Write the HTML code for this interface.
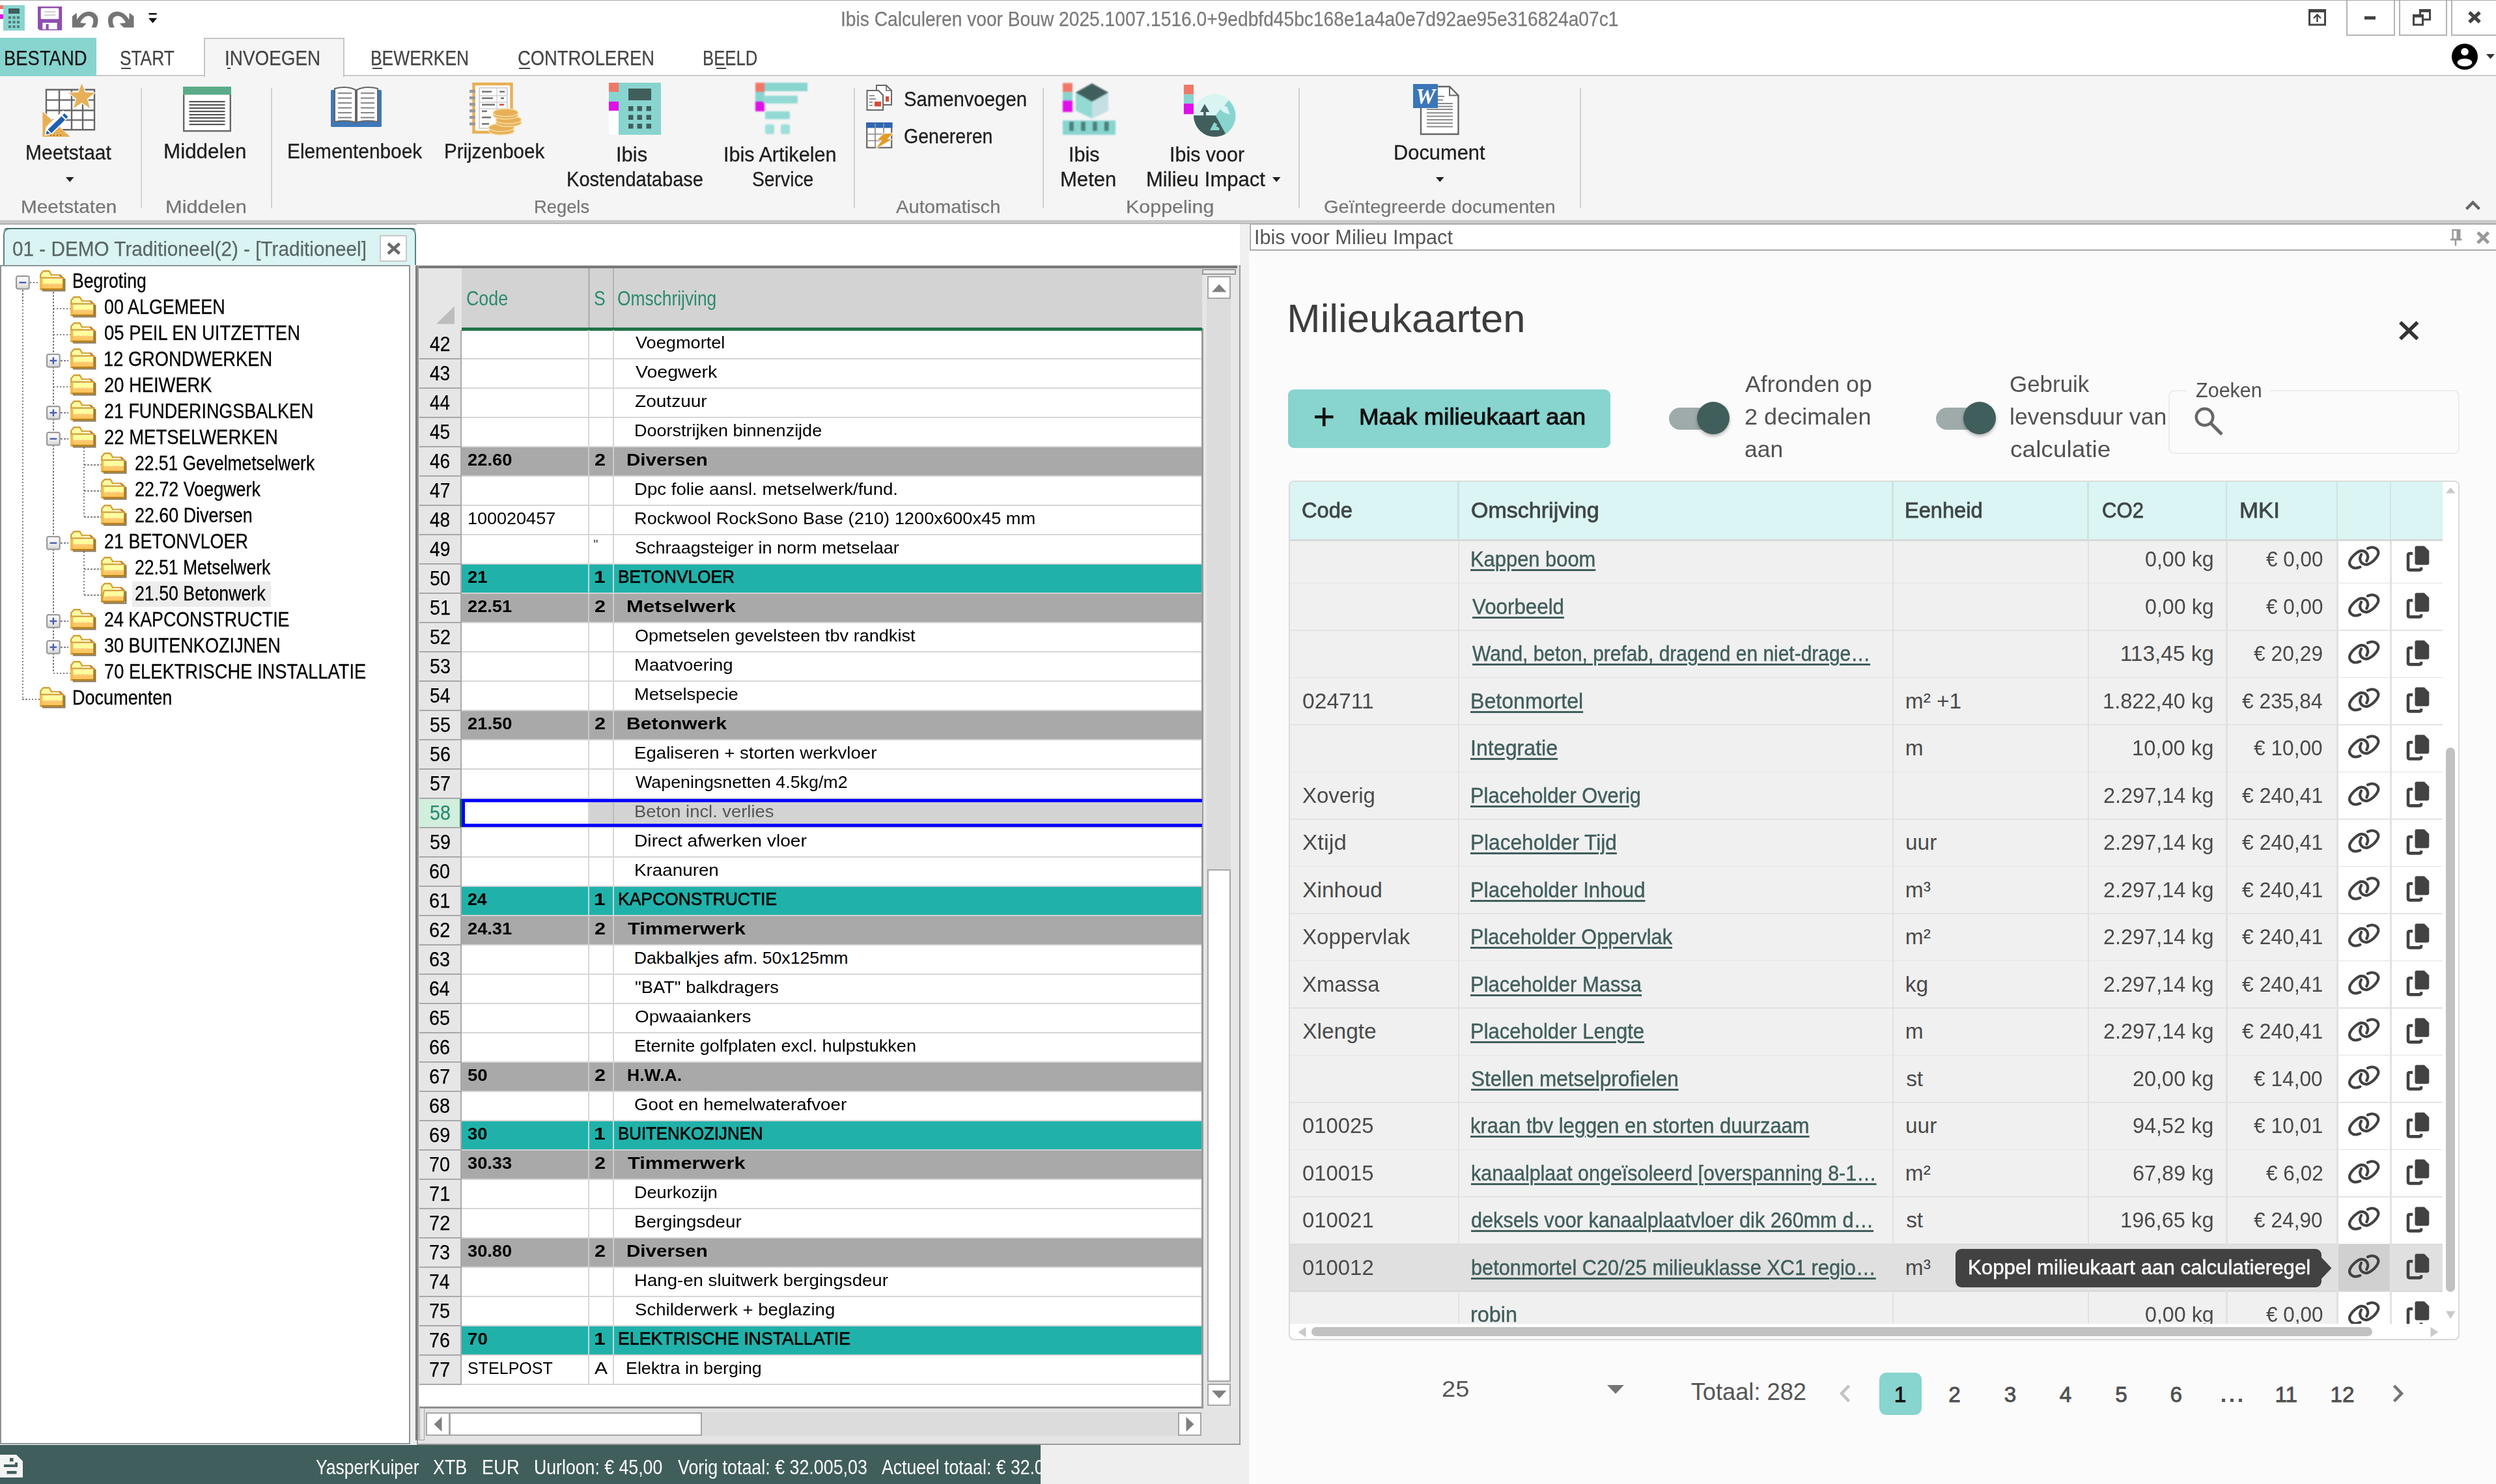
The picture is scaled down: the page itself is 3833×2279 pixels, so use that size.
<!DOCTYPE html>
<html><head><meta charset="utf-8"><title>Ibis Calculeren voor Bouw</title>
<style>
html,body{margin:0;padding:0;}
body{width:3833px;height:2279px;position:relative;overflow:hidden;background:#fff;font-family:"Liberation Sans",sans-serif;}
.b{position:absolute;box-sizing:border-box;}
.t{position:absolute;white-space:nowrap;transform-origin:0 50%;}
svg{overflow:visible;}
</style></head><body>
<svg class="b" style="left:0px;top:8px;" width="38" height="39" viewBox="0 0 38 39"><rect x="5" y="0" width="33" height="39" fill="#88d4cf"/>
<rect x="0" y="0" width="5" height="6" fill="#f07868"/><rect x="0" y="14" width="5" height="7" fill="#e010e8"/>
<rect x="13" y="5" width="17" height="8" fill="#405e5c"/>
<g fill="#4f7f7b"><rect x="13" y="17" width="4" height="4"/><rect x="19.5" y="17" width="4" height="4"/><rect x="26" y="17" width="4" height="4"/>
<rect x="13" y="24" width="4" height="4"/><rect x="19.5" y="24" width="4" height="4"/><rect x="26" y="24" width="4" height="4"/>
<rect x="13" y="31" width="4" height="4"/><rect x="19.5" y="31" width="4" height="4"/><rect x="26" y="31" width="4" height="4"/></g></svg>
<svg class="b" style="left:58px;top:10.3px;" width="38" height="37" viewBox="0 0 38 37"><path d="M0 0H37.200V36.500H3L0 33.500Z" fill="#8e4fae"/><rect x="4.700" y="2.600" width="27.600" height="16.700" rx="1.500" fill="#fff"/>
<rect x="9.800" y="7.300" width="17.500" height="1.800" fill="#c9c9c9"/><rect x="9.800" y="12.300" width="17.500" height="1.800" fill="#c9c9c9"/>
<rect x="7.300" y="25" width="22.400" height="9.900" fill="#fff"/><rect x="12.500" y="27" width="4.200" height="8" fill="#8e4fae"/></svg>
<svg class="b" style="left:110px;top:17px;" width="42" height="26" viewBox="0 0 42 26"><path d="M0.900 25.200V8L7.700 2.800L8.200 13.200C12 6 19 0.700 26.500 0.700C34 0.700 40.500 6 40.500 13.200C40.500 18 39.500 22 37.900 25.200H30.600C32.500 21 33.500 17.500 33.200 14.200C33 10 29.500 7.500 25.400 7.500C20.500 7.500 16 12 13.400 17.900L22.800 18.900L16.600 25.200Z" fill="#757575"/></svg>
<svg class="b" style="left:164.5px;top:17px;" width="42" height="26" viewBox="0 0 42 26"><g transform="translate(41.400,0) scale(-1,1)"><path d="M0.900 25.200V8L7.700 2.800L8.200 13.200C12 6 19 0.700 26.500 0.700C34 0.700 40.500 6 40.500 13.200C40.500 18 39.500 22 37.900 25.200H30.600C32.500 21 33.500 17.500 33.200 14.200C33 10 29.500 7.500 25.400 7.500C20.500 7.500 16 12 13.400 17.900L22.800 18.900L16.600 25.200Z" fill="#757575"/></g></svg>
<svg class="b" style="left:227.5px;top:19.8px;" width="15" height="17" viewBox="0 0 15 17"><rect x="0.600" y="0" width="12" height="2.600" fill="#111"/><path d="M0 7.800H13.200L6.600 15.600Z" fill="#111"/></svg>
<div class="t" style="top:13.7px;font-size:31.88px;line-height:31.88px;color:#7a7a7a;left:1291.46px;transform:scaleX(0.8838);-webkit-text-stroke:.25px #7a7a7a;">Ibis Calculeren voor Bouw 2025.1007.1516.0+9edbfd45bc168e1a4a0e7d92ae95e316824a07c1</div>
<svg class="b" style="left:3545px;top:14px;" width="28" height="26" viewBox="0 0 28 26"><rect x="1.5" y="3" width="24" height="21" fill="none" stroke="#444" stroke-width="3"/><rect x="0" y="0" width="27" height="5" fill="#444"/><path d="M13.5 20V9M8 14L13.5 8.5L19 14" fill="none" stroke="#444" stroke-width="2.4"/></svg>
<div class="b" style="left:3603px;top:-2px;width:75px;height:56.5px;background:#fff;border:2px solid #b4b4b4;"></div>
<div class="b" style="left:3683.5px;top:-2px;width:74px;height:56.5px;background:#fff;border:2px solid #b4b4b4;"></div>
<div class="b" style="left:3763.5px;top:-2px;width:76.5px;height:56.5px;background:#fff;border:2px solid #b4b4b4;"></div>
<div class="b" style="left:3630.5px;top:24.5px;width:17.5px;height:5.5px;background:#444;"></div>
<div class="b" style="left:0px;top:0px;width:3833px;height:1.2px;background:#a8a8a8;"></div>
<svg class="b" style="left:3705px;top:14px;" width="30" height="27" viewBox="0 0 30 27"><rect x="11.5" y="3" width="15" height="13" fill="#fff" stroke="#444" stroke-width="3"/><rect x="10" y="0" width="18" height="4.5" fill="#444"/><rect x="1.5" y="11" width="14" height="13" fill="#fff" stroke="#444" stroke-width="3"/><rect x="0" y="8" width="17" height="4.5" fill="#444"/></svg>
<svg class="b" style="left:3790px;top:17px;" width="20" height="19" viewBox="0 0 20 19"><path d="M2 2L18 17M18 2L2 17" stroke="#444" stroke-width="5.2" fill="none"/></svg>
<svg class="b" style="left:3765px;top:67px;" width="40" height="40" viewBox="0 0 40 40"><circle cx="20" cy="20" r="20" fill="#000"/><circle cx="20" cy="12.5" r="5.8" fill="#fff"/><ellipse cx="20" cy="29" rx="11.5" ry="6" fill="#fff"/></svg>
<svg class="b" style="left:3818px;top:83px;" width="14" height="8" viewBox="0 0 14 8"><path d="M0 0H13L6.5 7.5Z" fill="#333"/></svg>
<div class="b" style="left:0px;top:116px;width:3833px;height:222px;background:#f5f5f5;"></div>
<div class="b" style="left:0px;top:115px;width:3833px;height:2px;background:#c9c9c9;"></div>
<div class="b" style="left:0px;top:58px;width:148px;height:58.5px;background:#88d4cf;"></div>
<div class="b" style="left:313px;top:58px;width:216px;height:60px;background:#f5f5f5;border:2px solid #c6c6c6;border-bottom:none;"></div>
<div class="t" style="top:74px;font-size:31.88px;line-height:31.88px;color:#151515;left:5.81px;transform:scaleX(0.8604);-webkit-text-stroke:.25px #151515;">BESTAND</div>
<div class="t" style="top:74px;font-size:31.88px;line-height:31.88px;color:#444;left:183.82px;transform:scaleX(0.8243);-webkit-text-stroke:.25px #444;">START</div>
<div class="b" style="left:186px;top:103.5px;width:15.17px;height:2px;background:#444;"></div>
<div class="t" style="top:74px;font-size:31.88px;line-height:31.88px;color:#444;left:344.99px;transform:scaleX(0.8746);-webkit-text-stroke:.25px #444;">INVOEGEN</div>
<div class="b" style="left:348.5px;top:103.5px;width:5.5px;height:2px;background:#444;"></div>
<div class="t" style="top:74px;font-size:31.88px;line-height:31.88px;color:#444;left:568.89px;transform:scaleX(0.8285);-webkit-text-stroke:.25px #444;">BEWERKEN</div>
<div class="b" style="left:572px;top:103.5px;width:15.13px;height:2px;background:#444;"></div>
<div class="t" style="top:74px;font-size:31.88px;line-height:31.88px;color:#444;left:794.63px;transform:scaleX(0.8590);-webkit-text-stroke:.25px #444;">CONTROLEREN</div>
<div class="b" style="left:797px;top:103.5px;width:17.45px;height:2px;background:#444;"></div>
<div class="t" style="top:74px;font-size:31.88px;line-height:31.88px;color:#444;left:1078.94px;transform:scaleX(0.8065);-webkit-text-stroke:.25px #444;">BEELD</div>
<div class="b" style="left:1100px;top:103.5px;width:15px;height:2px;background:#444;"></div>
<div class="b" style="left:216px;top:135px;width:2px;height:185px;background:#d2d2d2;"></div>
<div class="b" style="left:416px;top:135px;width:2px;height:185px;background:#d2d2d2;"></div>
<div class="b" style="left:1310.5px;top:135px;width:2px;height:185px;background:#d2d2d2;"></div>
<div class="b" style="left:1601px;top:135px;width:2px;height:185px;background:#d2d2d2;"></div>
<div class="b" style="left:1993.5px;top:135px;width:2px;height:185px;background:#d2d2d2;"></div>
<div class="b" style="left:2425.5px;top:135px;width:2px;height:185px;background:#d2d2d2;"></div>
<div class="b" style="left:0px;top:337.5px;width:3833px;height:5.2px;background:#c9c9c9;"></div>
<div class="b" style="left:0px;top:342.5px;width:3833px;height:2px;background:#adadad;"></div>
<div class="t" style="top:219px;font-size:31.88px;line-height:31.88px;color:#1e1e1e;left:38.6px;transform:scaleX(0.9424);-webkit-text-stroke:.3px #1e1e1e;">Meetstaat</div>
<svg class="b" style="left:100.5px;top:272px;" width="13" height="8" viewBox="0 0 13 8"><path d="M0 0H12.5L6.25 7.5Z" fill="#222"/></svg>
<div class="t" style="top:304.2px;font-size:27.83px;line-height:27.83px;color:#777;left:31.62px;transform:scaleX(1.0695);-webkit-text-stroke:.25px #777;">Meetstaten</div>
<div class="t" style="top:217.2px;font-size:31.88px;line-height:31.88px;color:#1e1e1e;left:251.49px;transform:scaleX(0.9854);-webkit-text-stroke:.3px #1e1e1e;">Middelen</div>
<div class="t" style="top:304.2px;font-size:27.83px;line-height:27.83px;color:#777;left:254.04px;transform:scaleX(1.1061);-webkit-text-stroke:.25px #777;">Middelen</div>
<div class="t" style="top:217.2px;font-size:31.88px;line-height:31.88px;color:#1e1e1e;left:441.11px;transform:scaleX(0.9352);-webkit-text-stroke:.3px #1e1e1e;">Elementenboek</div>
<div class="t" style="top:217.2px;font-size:31.88px;line-height:31.88px;color:#1e1e1e;left:681.64px;transform:scaleX(0.9257);-webkit-text-stroke:.3px #1e1e1e;">Prijzenboek</div>
<div class="t" style="top:222.2px;font-size:31.88px;line-height:31.88px;color:#1e1e1e;left:946.21px;transform:scaleX(0.9716);-webkit-text-stroke:.3px #1e1e1e;">Ibis</div>
<div class="t" style="top:259.6px;font-size:31.88px;line-height:31.88px;color:#1e1e1e;left:869.67px;transform:scaleX(0.9116);-webkit-text-stroke:.3px #1e1e1e;">Kostendatabase</div>
<div class="t" style="top:222.2px;font-size:31.88px;line-height:31.88px;color:#1e1e1e;left:1111.24px;transform:scaleX(0.9602);-webkit-text-stroke:.3px #1e1e1e;">Ibis Artikelen</div>
<div class="t" style="top:259.6px;font-size:31.88px;line-height:31.88px;color:#1e1e1e;left:1154.73px;transform:scaleX(0.8878);-webkit-text-stroke:.3px #1e1e1e;">Service</div>
<div class="t" style="top:304.2px;font-size:27.83px;line-height:27.83px;color:#777;left:819.81px;transform:scaleX(0.9823);-webkit-text-stroke:.25px #777;">Regels</div>
<div class="t" style="top:136.5px;font-size:31.88px;line-height:31.88px;color:#1e1e1e;left:1387.68px;transform:scaleX(0.9194);-webkit-text-stroke:.3px #1e1e1e;">Samenvoegen</div>
<div class="t" style="top:194.2px;font-size:31.88px;line-height:31.88px;color:#1e1e1e;left:1387.57px;transform:scaleX(0.8952);-webkit-text-stroke:.3px #1e1e1e;">Genereren</div>
<div class="t" style="top:304.2px;font-size:27.83px;line-height:27.83px;color:#777;left:1376px;transform:scaleX(1.0471);-webkit-text-stroke:.25px #777;">Automatisch</div>
<div class="t" style="top:222.2px;font-size:31.88px;line-height:31.88px;color:#1e1e1e;left:1641.25px;transform:scaleX(0.9585);-webkit-text-stroke:.3px #1e1e1e;">Ibis</div>
<div class="t" style="top:259.6px;font-size:31.88px;line-height:31.88px;color:#1e1e1e;left:1627.52px;transform:scaleX(0.9742);-webkit-text-stroke:.3px #1e1e1e;">Meten</div>
<div class="t" style="top:222.2px;font-size:31.88px;line-height:31.88px;color:#1e1e1e;left:1796.26px;transform:scaleX(0.9558);-webkit-text-stroke:.3px #1e1e1e;">Ibis voor</div>
<div class="t" style="top:259.6px;font-size:31.88px;line-height:31.88px;color:#1e1e1e;left:1759.51px;transform:scaleX(0.9744);-webkit-text-stroke:.3px #1e1e1e;">Milieu Impact</div>
<svg class="b" style="left:1953.5px;top:271.5px;" width="13" height="8" viewBox="0 0 13 8"><path d="M0 0H12.5L6.25 7.5Z" fill="#222"/></svg>
<div class="t" style="top:304.2px;font-size:27.83px;line-height:27.83px;color:#777;left:1728.57px;transform:scaleX(1.0936);-webkit-text-stroke:.25px #777;">Koppeling</div>
<div class="t" style="top:219px;font-size:31.88px;line-height:31.88px;color:#1e1e1e;left:2139.53px;transform:scaleX(0.9672);-webkit-text-stroke:.3px #1e1e1e;">Document</div>
<svg class="b" style="left:2205px;top:272px;" width="13" height="8" viewBox="0 0 13 8"><path d="M0 0H12.5L6.25 7.5Z" fill="#222"/></svg>
<div class="t" style="top:304.2px;font-size:27.83px;line-height:27.83px;color:#777;left:2033.05px;transform:scaleX(1.0452);-webkit-text-stroke:.25px #777;">Geïntegreerde documenten</div>
<svg class="b" style="left:3785px;top:307px;" width="26" height="16" viewBox="0 0 26 16"><path d="M2.5 14L12.5 4L22.5 14" fill="none" stroke="#666" stroke-width="4.5"/></svg>
<svg class="b" style="left:65px;top:129px;" width="82" height="82" viewBox="0 0 82 82"><rect x="6" y="8.700" width="74" height="61.500" fill="#fff"/><g fill="none" stroke="#666" stroke-width="2.400"><path d="M6 8.700H80V70.200H6ZM6 24.600H80M6 40.500H80M6 55.400H80M26 8.700V70.200M45 8.700V70.200M62 8.700V70.200"/></g>
<path d="M60.6 -3.5L66.8 11.5L82.9 12.7L70.6 23.2L74.4 39.0L60.6 30.5L46.8 39.0L50.6 23.2L38.3 12.7L54.4 11.5Z" fill="#f5f5f5"/><path d="M60.6 -1.0L65.7 13.0L80.6 13.5L68.8 22.7L72.9 37.0L60.6 28.6L48.3 37.0L52.4 22.7L40.6 13.5L55.5 13.0Z" fill="#e8b056"/>
<path d="M-2 38L46 84H-2Z" fill="#f5f5f5"/><path d="M0.400 42.500V81H42.700Z" fill="#e8b056"/>
<path d="M3.500 79.500L5.500 66L32 40.500L42 49.500L15.500 76.500Z" fill="#fff"/><path d="M8.500 70L29.500 49.500L35 55L14 75.500Z" fill="#1f5fb0"/><path d="M31 48L34 45L39.500 50.500L36.500 53.500Z" fill="#1f5fb0"/><path d="M5.500 77.500L7 71.500L12 76Z" fill="#1f5fb0"/>
<g fill="#b07a28"><rect x="12" y="77.500" width="2" height="2.500"/><rect x="17" y="77.500" width="2" height="2.500"/><rect x="22" y="77.500" width="2" height="2.500"/><rect x="27" y="77.500" width="2" height="2.500"/></g></svg>
<svg class="b" style="left:281px;top:132.5px;" width="74" height="70" viewBox="0 0 74 70"><rect x="1.2" y="1.2" width="71.600" height="67" fill="#fff" stroke="#666" stroke-width="2.4"/><rect x="0" y="0" width="74" height="12.500" fill="#5aac88"/>
<g fill="#555"><rect x="9.500" y="22" width="55" height="2.2"/><rect x="9.500" y="27" width="55" height="2.2"/><rect x="9.500" y="32" width="55" height="2.2"/><rect x="9.500" y="37" width="55" height="2.2"/><rect x="9.500" y="42" width="55" height="2.2"/><rect x="9.500" y="47" width="55" height="2.2"/><rect x="9.500" y="52" width="55" height="2.2"/><rect x="9.500" y="57" width="55" height="2.2"/></g></svg>
<svg class="b" style="left:508px;top:134px;" width="78" height="62" viewBox="0 0 78 62"><rect x="0" y="4" width="78" height="57" rx="2" fill="#3f78b8"/><path d="M6 2C18 -1 30 0 38 4V54C30 51 18 51 6 53Z" fill="#fff" stroke="#666" stroke-width="2"/><path d="M72 2C60 -1 48 0 40 4V54C48 51 60 51 72 53Z" fill="#fff" stroke="#666" stroke-width="2"/>
<g fill="#8a8a8a"><rect x="11" y="8" width="21" height="2.200"/><rect x="11" y="15.500" width="21" height="2.200"/><rect x="11" y="23" width="21" height="2.200"/><rect x="11" y="30.500" width="21" height="2.200"/><rect x="11" y="38" width="21" height="2.200"/><rect x="11" y="45.500" width="21" height="2.200"/>
<rect x="46" y="8" width="21" height="2.200"/><rect x="46" y="15.500" width="21" height="2.200"/><rect x="46" y="23" width="21" height="2.200"/><rect x="46" y="30.500" width="21" height="2.200"/><rect x="46" y="38" width="21" height="2.200"/><rect x="46" y="45.500" width="21" height="2.200"/></g></svg>
<svg class="b" style="left:720px;top:127px;" width="81" height="82" viewBox="0 0 81 82"><rect x="7.500" y="2" width="58" height="74" fill="#fff" stroke="#e8b056" stroke-width="4.500"/><rect x="16" y="8" width="43" height="62" fill="#fff" stroke="#c8c8c8" stroke-width="1.500"/><path d="M43 8V45M16 20H59M16 30H59M16 40H59" stroke="#d0d0d0" stroke-width="1.300"/>
<g fill="#777"><rect x="20" y="12.500" width="15" height="2.600"/><rect x="20" y="22.500" width="17" height="2.600"/><rect x="20" y="32.500" width="20" height="2.600"/><rect x="20" y="42.500" width="8" height="2.600"/><rect x="20" y="52" width="14" height="2.600"/><rect x="20" y="62" width="11" height="2.600"/><rect x="47" y="12.500" width="8" height="2.600"/><rect x="49" y="22.500" width="5" height="2.600"/></g><rect x="47" y="32.500" width="7" height="2.600" fill="#d94a3a"/>
<g fill="#999"><rect x="1" y="11" width="9" height="4.500"/><rect x="1" y="21" width="9" height="4.500"/><rect x="1" y="31" width="9" height="4.500"/><rect x="1" y="41" width="9" height="4.500"/><rect x="1" y="51" width="9" height="4.500"/><rect x="1" y="61" width="9" height="4.500"/></g>
<g fill="#e8b056" stroke="#f6dca4" stroke-width="1.600"><ellipse cx="50" cy="74" rx="19.500" ry="6"/><ellipse cx="50" cy="69" rx="19.500" ry="6"/><ellipse cx="61" cy="61.500" rx="19.500" ry="6"/><ellipse cx="61" cy="57" rx="19.500" ry="6"/><ellipse cx="56.500" cy="50" rx="19" ry="6"/><ellipse cx="56.500" cy="46" rx="19" ry="6"/></g></svg>
<svg class="b" style="left:935px;top:127px;" width="81" height="81" viewBox="0 0 81 81"><rect x="0" y="0" width="15" height="80" fill="#fff"/><rect x="15" y="0" width="65" height="80" fill="#88d4cf"/><rect x="0" y="0" width="15" height="14" fill="#f07868"/><rect x="0" y="14" width="15" height="15" fill="#88d4cf"/><rect x="0" y="29" width="15" height="14" fill="#e010e8"/>
<rect x="30" y="9" width="35" height="18" fill="#405e5c"/><g fill="#405e5c"><rect x="30" y="36" width="7.500" height="7.500"/><rect x="43.500" y="36" width="7.500" height="7.500"/><rect x="57.500" y="36" width="7.500" height="7.500"/><rect x="30" y="49.500" width="7.500" height="7.500"/><rect x="43.500" y="49.500" width="7.500" height="7.500"/><rect x="57.500" y="49.500" width="7.500" height="7.500"/><rect x="30" y="63" width="7.500" height="7.500"/><rect x="43.500" y="63" width="7.500" height="7.500"/><rect x="57.500" y="63" width="7.500" height="7.500"/></g></svg>
<svg class="b" style="left:1160px;top:127px;filter:blur(.800px);" width="81" height="81" viewBox="0 0 81 81"><rect x="0" y="0" width="14" height="14" fill="#f07868"/><rect x="0" y="14" width="14" height="15" fill="#88d4cf"/><rect x="0" y="29" width="14" height="15" fill="#e010e8"/>
<rect x="14" y="0" width="66" height="13" fill="#88d4cf"/><rect x="12" y="20" width="53" height="12" rx="2" fill="#92d9d4"/><rect x="15" y="44" width="38" height="12" rx="2" fill="#92d9d4"/><rect x="15" y="64" width="14" height="15" rx="3" fill="#9fdeda"/><rect x="39" y="64" width="14" height="15" rx="3" fill="#9fdeda"/></svg>
<svg class="b" style="left:1330px;top:130px;" width="41" height="40" viewBox="0 0 41 40"><path d="M16 1H31L39 9V31H16Z" fill="#fff" stroke="#666" stroke-width="2"/><path d="M31 1V9H39" fill="none" stroke="#666" stroke-width="1.600"/><rect x="30" y="18" width="5" height="8" fill="#d94a3a"/>
<path d="M1.500 9H19L26 16V39H1.500Z" fill="#fff" stroke="#666" stroke-width="2"/><g fill="#888"><rect x="5" y="16" width="8" height="1.800"/><rect x="5" y="21" width="10" height="1.800"/><rect x="5" y="26" width="5" height="1.800"/><rect x="5" y="31" width="5" height="1.800"/></g><rect x="13" y="26" width="10" height="7.500" fill="#d94a3a"/></svg>
<svg class="b" style="left:1330px;top:187.5px;" width="41" height="40" viewBox="0 0 41 40"><rect x="1.200" y="1.200" width="38" height="37.500" fill="#fff" stroke="#666" stroke-width="2.200"/><rect x="0" y="0" width="40.500" height="8.500" fill="#2f66ad"/><path d="M1 18H40M1 28H22M14 3V39M27 3V18" stroke="#8a8a8a" stroke-width="1.700" fill="none"/><path d="M14 1V8M27 1V8" stroke="#6f98cc" stroke-width="1.500"/>
<path d="M20 20H38V40H20Z" fill="#fff" opacity=".0"/><path d="M40.900 17L26.800 17.400L17.900 26.700L24.400 27.500L15.500 40L38.500 26.300L32.400 25.500Z" fill="#e29c28" stroke="#f5f5f5" stroke-width="1.800" paint-order="stroke"/></svg>
<svg class="b" style="left:1632px;top:127px;filter:blur(1.100px);" width="82" height="81" viewBox="0 0 82 81"><rect x="0" y="0.500" width="15" height="14" fill="#f07868"/><rect x="0" y="14.500" width="15" height="13" fill="#88d4cf"/><rect x="0" y="27.500" width="15" height="17.500" fill="#e010e8"/>
<path d="M20 15L45 2L70 15V43L45 55L20 43Z" fill="#93d9d4"/><path d="M45 27L70 15V43L45 55Z" fill="#c4e0e4"/><path d="M20 15L45 1L70 15L45 29Z" fill="#405e5c"/>
<rect x="0" y="58" width="81" height="22" fill="#88d4cf"/><g fill="#4a7f7b"><rect x="10.200" y="60" width="6.500" height="14"/><rect x="28.200" y="60" width="6.500" height="14"/><rect x="46.200" y="60" width="6.500" height="14"/><rect x="64" y="60" width="6.500" height="14"/></g></svg>
<svg class="b" style="left:1817px;top:129px;filter:blur(.600px);" width="82" height="82" viewBox="0 0 82 82"><rect x="0.900" y="1.100" width="15.100" height="14.800" fill="#f07868"/><rect x="0.900" y="15.900" width="15.100" height="14.200" fill="#88d4cf"/><rect x="0.900" y="30.100" width="15.100" height="16.200" fill="#e010e8"/>
<circle cx="48.700" cy="48.300" r="32.700" fill="#d9f4f3"/>
<path d="M49.700 48.300L57.100 38.500L61.500 43.200L72 46.900L67.200 34.800L62.900 34.100L69.600 25A32.700 32.700 0 0 1 65.100 76.600Z" fill="#88d4cf"/>
<path d="M16 48.300H49.700L65.100 76.600A32.700 32.700 0 0 1 16 48.300Z" fill="#405e5c"/>
<path d="M26.100 42.900L32.900 30.800L40.300 42.900Z" fill="#405e5c"/><rect x="31.200" y="42" width="3.700" height="7" fill="#405e5c"/>
<path d="M41 70.900L47.400 58.700L52.500 62L50.500 64.500L55.400 67.500V70.900Z" fill="#88d4cf"/></svg>
<svg class="b" style="left:2170px;top:129px;" width="72" height="80" viewBox="0 0 72 80"><path d="M12 4H56L69.500 17.500V77H12Z" fill="#fff" stroke="#666" stroke-width="2.400"/><path d="M56 4V17.500H69.500" fill="none" stroke="#666" stroke-width="2"/>
<g fill="#8a8a8a"><rect x="38" y="18" width="10" height="2"/><rect x="38" y="23.500" width="8" height="2"/><rect x="21" y="38" width="40" height="2"/><rect x="21" y="43.300" width="40" height="2"/><rect x="21" y="48.600" width="40" height="2"/><rect x="21" y="53.900" width="40" height="2"/><rect x="21" y="59.200" width="40" height="2"/><rect x="21" y="64.500" width="40" height="2"/><rect x="38" y="29" width="23" height="2"/><rect x="38" y="33.500" width="23" height="2"/></g>
<rect x="0" y="0" width="38" height="37" fill="#3b76b8"/><text x="19" y="30" font-family="Liberation Serif" font-style="italic" font-weight="bold" font-size="34" fill="#fff" text-anchor="middle">W</text></svg>
<svg width="0" height="0" style="position:absolute"><defs><linearGradient id="fg" x1="0" y1="0" x2="0" y2="1"><stop offset="0" stop-color="#fffff4"/><stop offset=".16" stop-color="#ffff9e"/><stop offset=".5" stop-color="#ffff99"/><stop offset=".56" stop-color="#fecb68"/><stop offset="1" stop-color="#fbc25c"/></linearGradient><linearGradient id="pg" x1="0" y1="0" x2="0" y2="1"><stop offset="0" stop-color="#fcfcfc"/><stop offset=".5" stop-color="#f0f0f0"/><stop offset="1" stop-color="#d6d6d6"/></linearGradient></defs></svg>
<div class="b" style="left:5px;top:350px;width:633.5px;height:60px;background:#daf3f3;border:2px solid #5c7f80;border-radius:10px 10px 0 0;border-bottom:none;"></div>
<div class="b" style="left:5px;top:350px;width:633.5px;height:6px;border-radius:12px 12px 0 0;border-top:2.200px solid #4a7272;"></div>
<div class="t" style="top:366.8px;font-size:31.88px;line-height:31.88px;color:#5a6666;left:19.46px;transform:scaleX(0.9323);-webkit-text-stroke:.25px #5a6666;">01 - DEMO Traditioneel(2) - [Traditioneel]</div>
<div class="b" style="left:583px;top:361px;width:42px;height:41px;background:#fff;border:2px solid #c9c9c9;"></div>
<svg class="b" style="left:593.5px;top:371.5px;" width="22" height="20" viewBox="0 0 22 20"><path d="M2 2L19.500 17.500M19.500 2L2 17.500" stroke="#6a6a6a" stroke-width="4.600" fill="none"/></svg>
<div class="b" style="left:0px;top:407px;width:630.3px;height:1811px;background:#fff;border:2.500px solid #8e949c;"></div>
<div class="b" style="left:630.3px;top:407px;width:10px;height:1812px;background:#f0f0f0;"></div>
<div class="b" style="left:33.5px;top:445px;width:2px;height:628px;background:repeating-linear-gradient(180deg,#808080 0 2.500px,transparent 2.500px 5px);"></div>
<div class="b" style="left:46px;top:433px;width:15px;height:2px;background:repeating-linear-gradient(90deg,#808080 0 2.500px,transparent 2.500px 5px);"></div>
<div class="b" style="left:34px;top:1073px;width:27px;height:2px;background:repeating-linear-gradient(90deg,#808080 0 2.500px,transparent 2.500px 5px);"></div>
<div class="b" style="left:81px;top:448px;width:2px;height:585px;background:repeating-linear-gradient(180deg,#808080 0 2.500px,transparent 2.500px 5px);"></div>
<div class="b" style="left:128px;top:687px;width:2px;height:106px;background:repeating-linear-gradient(180deg,#808080 0 2.500px,transparent 2.500px 5px);"></div>
<div class="b" style="left:128px;top:847px;width:2px;height:66px;background:repeating-linear-gradient(180deg,#808080 0 2.500px,transparent 2.500px 5px);"></div>
<svg class="b" style="left:60.9px;top:414.5px;" width="40" height="33" viewBox="0 0 40 33"><path d="M4 31.300H38.300V13" stroke="#4a3c20" stroke-width="2.300" fill="none" opacity=".7"/><path d="M1.200 28V6.500L5.500 1.250H14.600L18.200 7.300H31L35.300 11.500V28Z" fill="#fbfba4" stroke="#d4a035" stroke-width="2.300" stroke-linejoin="round"/><path d="M19 9.600H30.500" stroke="#fff" stroke-width="2"/><path d="M30.500 7.300L35.300 11.800" stroke="#c8703a" stroke-width="2.300"/><rect x="1.200" y="11.600" width="35.300" height="17.600" fill="url(#fg)" stroke="#d4a035" stroke-width="2.300"/>
<rect x="0.100" y="12.500" width="4.300" height="16" fill="#f2bc4e"/><path d="M2.500 29.200H37" stroke="#b8801e" stroke-width="2.600"/><path d="M36.500 13V29.500" stroke="#ad7a1e" stroke-width="2.300"/>
<path d="M10.500 21.300H31" stroke="#ffc49a" stroke-width="2" stroke-dasharray="3.500 3.500"/></svg>
<svg class="b" style="left:23.5px;top:422.5px;" width="22" height="22" viewBox="0 0 22 22"><rect x="1.100" y="1.100" width="19.600" height="19.600" rx="2.500" fill="url(#pg)" stroke="#9b9b9b" stroke-width="2.200"/><path d="M5.500 10.900H16.300" stroke="#4a5eb0" stroke-width="2.400"/></svg>
<div class="t" style="top:416.2px;font-size:31.59px;line-height:31.59px;color:#000;left:111.47px;transform:scaleX(0.8410);-webkit-text-stroke:.3px #000;">Begroting</div>
<div class="b" style="left:82px;top:473px;width:26px;height:2px;background:repeating-linear-gradient(90deg,#808080 0 2.500px,transparent 2.500px 5px);"></div>
<svg class="b" style="left:107.9px;top:454.5px;" width="40" height="33" viewBox="0 0 40 33"><path d="M4 31.300H38.300V13" stroke="#4a3c20" stroke-width="2.300" fill="none" opacity=".7"/><path d="M1.200 28V6.500L5.500 1.250H14.600L18.200 7.300H31L35.300 11.500V28Z" fill="#fbfba4" stroke="#d4a035" stroke-width="2.300" stroke-linejoin="round"/><path d="M19 9.600H30.500" stroke="#fff" stroke-width="2"/><path d="M30.500 7.300L35.300 11.800" stroke="#c8703a" stroke-width="2.300"/><rect x="1.200" y="11.600" width="35.300" height="17.600" fill="url(#fg)" stroke="#d4a035" stroke-width="2.300"/>
<rect x="0.100" y="12.500" width="4.300" height="16" fill="#f2bc4e"/><path d="M2.500 29.200H37" stroke="#b8801e" stroke-width="2.600"/><path d="M36.500 13V29.500" stroke="#ad7a1e" stroke-width="2.300"/>
<path d="M10.500 21.300H31" stroke="#ffc49a" stroke-width="2" stroke-dasharray="3.500 3.500"/></svg>
<div class="t" style="top:456.2px;font-size:31.59px;line-height:31.59px;color:#000;left:159.96px;transform:scaleX(0.8529);-webkit-text-stroke:.3px #000;">00 ALGEMEEN</div>
<div class="b" style="left:82px;top:513px;width:26px;height:2px;background:repeating-linear-gradient(90deg,#808080 0 2.500px,transparent 2.500px 5px);"></div>
<svg class="b" style="left:107.9px;top:494.5px;" width="40" height="33" viewBox="0 0 40 33"><path d="M4 31.300H38.300V13" stroke="#4a3c20" stroke-width="2.300" fill="none" opacity=".7"/><path d="M1.200 28V6.500L5.500 1.250H14.600L18.200 7.300H31L35.300 11.500V28Z" fill="#fbfba4" stroke="#d4a035" stroke-width="2.300" stroke-linejoin="round"/><path d="M19 9.600H30.500" stroke="#fff" stroke-width="2"/><path d="M30.500 7.300L35.300 11.800" stroke="#c8703a" stroke-width="2.300"/><rect x="1.200" y="11.600" width="35.300" height="17.600" fill="url(#fg)" stroke="#d4a035" stroke-width="2.300"/>
<rect x="0.100" y="12.500" width="4.300" height="16" fill="#f2bc4e"/><path d="M2.500 29.200H37" stroke="#b8801e" stroke-width="2.600"/><path d="M36.500 13V29.500" stroke="#ad7a1e" stroke-width="2.300"/>
<path d="M10.500 21.300H31" stroke="#ffc49a" stroke-width="2" stroke-dasharray="3.500 3.500"/></svg>
<div class="t" style="top:496.2px;font-size:31.59px;line-height:31.59px;color:#000;left:159.94px;transform:scaleX(0.8692);-webkit-text-stroke:.3px #000;">05 PEIL EN UITZETTEN</div>
<div class="b" style="left:93px;top:553px;width:15px;height:2px;background:repeating-linear-gradient(90deg,#808080 0 2.500px,transparent 2.500px 5px);"></div>
<svg class="b" style="left:107.9px;top:534.5px;" width="40" height="33" viewBox="0 0 40 33"><path d="M4 31.300H38.300V13" stroke="#4a3c20" stroke-width="2.300" fill="none" opacity=".7"/><path d="M1.200 28V6.500L5.500 1.250H14.600L18.200 7.300H31L35.300 11.500V28Z" fill="#fbfba4" stroke="#d4a035" stroke-width="2.300" stroke-linejoin="round"/><path d="M19 9.600H30.500" stroke="#fff" stroke-width="2"/><path d="M30.500 7.300L35.300 11.800" stroke="#c8703a" stroke-width="2.300"/><rect x="1.200" y="11.600" width="35.300" height="17.600" fill="url(#fg)" stroke="#d4a035" stroke-width="2.300"/>
<rect x="0.100" y="12.500" width="4.300" height="16" fill="#f2bc4e"/><path d="M2.500 29.200H37" stroke="#b8801e" stroke-width="2.600"/><path d="M36.500 13V29.500" stroke="#ad7a1e" stroke-width="2.300"/>
<path d="M10.500 21.300H31" stroke="#ffc49a" stroke-width="2" stroke-dasharray="3.500 3.500"/></svg>
<svg class="b" style="left:71px;top:542.5px;" width="22" height="22" viewBox="0 0 22 22"><rect x="1.100" y="1.100" width="19.600" height="19.600" rx="2.500" fill="url(#pg)" stroke="#9b9b9b" stroke-width="2.200"/><path d="M5.500 10.900H16.300" stroke="#4a5eb0" stroke-width="2.400"/><path d="M10.900 5.500V16.300" stroke="#4a5eb0" stroke-width="2.400"/></svg>
<div class="t" style="top:536.2px;font-size:31.59px;line-height:31.59px;color:#000;left:158.85px;transform:scaleX(0.8636);-webkit-text-stroke:.3px #000;">12 GRONDWERKEN</div>
<div class="b" style="left:82px;top:593px;width:26px;height:2px;background:repeating-linear-gradient(90deg,#808080 0 2.500px,transparent 2.500px 5px);"></div>
<svg class="b" style="left:107.9px;top:574.5px;" width="40" height="33" viewBox="0 0 40 33"><path d="M4 31.300H38.300V13" stroke="#4a3c20" stroke-width="2.300" fill="none" opacity=".7"/><path d="M1.200 28V6.500L5.500 1.250H14.600L18.200 7.300H31L35.300 11.500V28Z" fill="#fbfba4" stroke="#d4a035" stroke-width="2.300" stroke-linejoin="round"/><path d="M19 9.600H30.500" stroke="#fff" stroke-width="2"/><path d="M30.500 7.300L35.300 11.800" stroke="#c8703a" stroke-width="2.300"/><rect x="1.200" y="11.600" width="35.300" height="17.600" fill="url(#fg)" stroke="#d4a035" stroke-width="2.300"/>
<rect x="0.100" y="12.500" width="4.300" height="16" fill="#f2bc4e"/><path d="M2.500 29.200H37" stroke="#b8801e" stroke-width="2.600"/><path d="M36.500 13V29.500" stroke="#ad7a1e" stroke-width="2.300"/>
<path d="M10.500 21.300H31" stroke="#ffc49a" stroke-width="2" stroke-dasharray="3.500 3.500"/></svg>
<div class="t" style="top:576.2px;font-size:31.59px;line-height:31.59px;color:#000;left:159.53px;transform:scaleX(0.8657);-webkit-text-stroke:.3px #000;">20 HEIWERK</div>
<div class="b" style="left:93px;top:633px;width:15px;height:2px;background:repeating-linear-gradient(90deg,#808080 0 2.500px,transparent 2.500px 5px);"></div>
<svg class="b" style="left:107.9px;top:614.5px;" width="40" height="33" viewBox="0 0 40 33"><path d="M4 31.300H38.300V13" stroke="#4a3c20" stroke-width="2.300" fill="none" opacity=".7"/><path d="M1.200 28V6.500L5.500 1.250H14.600L18.200 7.300H31L35.300 11.500V28Z" fill="#fbfba4" stroke="#d4a035" stroke-width="2.300" stroke-linejoin="round"/><path d="M19 9.600H30.500" stroke="#fff" stroke-width="2"/><path d="M30.500 7.300L35.300 11.800" stroke="#c8703a" stroke-width="2.300"/><rect x="1.200" y="11.600" width="35.300" height="17.600" fill="url(#fg)" stroke="#d4a035" stroke-width="2.300"/>
<rect x="0.100" y="12.500" width="4.300" height="16" fill="#f2bc4e"/><path d="M2.500 29.200H37" stroke="#b8801e" stroke-width="2.600"/><path d="M36.500 13V29.500" stroke="#ad7a1e" stroke-width="2.300"/>
<path d="M10.500 21.300H31" stroke="#ffc49a" stroke-width="2" stroke-dasharray="3.500 3.500"/></svg>
<svg class="b" style="left:71px;top:622.5px;" width="22" height="22" viewBox="0 0 22 22"><rect x="1.100" y="1.100" width="19.600" height="19.600" rx="2.500" fill="url(#pg)" stroke="#9b9b9b" stroke-width="2.200"/><path d="M5.500 10.900H16.300" stroke="#4a5eb0" stroke-width="2.400"/><path d="M10.900 5.500V16.300" stroke="#4a5eb0" stroke-width="2.400"/></svg>
<div class="t" style="top:616.2px;font-size:31.59px;line-height:31.59px;color:#000;left:159.55px;transform:scaleX(0.8518);-webkit-text-stroke:.3px #000;">21 FUNDERINGSBALKEN</div>
<div class="b" style="left:93px;top:673px;width:15px;height:2px;background:repeating-linear-gradient(90deg,#808080 0 2.500px,transparent 2.500px 5px);"></div>
<svg class="b" style="left:107.9px;top:654.5px;" width="40" height="33" viewBox="0 0 40 33"><path d="M4 31.300H38.300V13" stroke="#4a3c20" stroke-width="2.300" fill="none" opacity=".7"/><path d="M1.200 28V6.500L5.500 1.250H14.600L18.200 7.300H31L35.300 11.500V28Z" fill="#fbfba4" stroke="#d4a035" stroke-width="2.300" stroke-linejoin="round"/><path d="M19 9.600H30.500" stroke="#fff" stroke-width="2"/><path d="M30.500 7.300L35.300 11.800" stroke="#c8703a" stroke-width="2.300"/><rect x="1.200" y="11.600" width="35.300" height="17.600" fill="url(#fg)" stroke="#d4a035" stroke-width="2.300"/>
<rect x="0.100" y="12.500" width="4.300" height="16" fill="#f2bc4e"/><path d="M2.500 29.200H37" stroke="#b8801e" stroke-width="2.600"/><path d="M36.500 13V29.500" stroke="#ad7a1e" stroke-width="2.300"/>
<path d="M10.500 21.300H31" stroke="#ffc49a" stroke-width="2" stroke-dasharray="3.500 3.500"/></svg>
<svg class="b" style="left:71px;top:662.5px;" width="22" height="22" viewBox="0 0 22 22"><rect x="1.100" y="1.100" width="19.600" height="19.600" rx="2.500" fill="url(#pg)" stroke="#9b9b9b" stroke-width="2.200"/><path d="M5.500 10.900H16.300" stroke="#4a5eb0" stroke-width="2.400"/></svg>
<div class="t" style="top:656.2px;font-size:31.59px;line-height:31.59px;color:#000;left:159.52px;transform:scaleX(0.8706);-webkit-text-stroke:.3px #000;">22 METSELWERKEN</div>
<div class="b" style="left:129px;top:713px;width:26px;height:2px;background:repeating-linear-gradient(90deg,#808080 0 2.500px,transparent 2.500px 5px);"></div>
<svg class="b" style="left:154.9px;top:694.5px;" width="40" height="33" viewBox="0 0 40 33"><path d="M4 31.300H38.300V13" stroke="#4a3c20" stroke-width="2.300" fill="none" opacity=".7"/><path d="M1.200 28V6.500L5.500 1.250H14.600L18.200 7.300H31L35.300 11.500V28Z" fill="#fbfba4" stroke="#d4a035" stroke-width="2.300" stroke-linejoin="round"/><path d="M19 9.600H30.500" stroke="#fff" stroke-width="2"/><path d="M30.500 7.300L35.300 11.800" stroke="#c8703a" stroke-width="2.300"/><rect x="1.200" y="11.600" width="35.300" height="17.600" fill="url(#fg)" stroke="#d4a035" stroke-width="2.300"/>
<rect x="0.100" y="12.500" width="4.300" height="16" fill="#f2bc4e"/><path d="M2.500 29.200H37" stroke="#b8801e" stroke-width="2.600"/><path d="M36.500 13V29.500" stroke="#ad7a1e" stroke-width="2.300"/>
<path d="M10.500 21.300H31" stroke="#ffc49a" stroke-width="2" stroke-dasharray="3.500 3.500"/></svg>
<div class="t" style="top:696.2px;font-size:31.59px;line-height:31.59px;color:#000;left:206.88px;transform:scaleX(0.8368);-webkit-text-stroke:.3px #000;">22.51 Gevelmetselwerk</div>
<div class="b" style="left:129px;top:753px;width:26px;height:2px;background:repeating-linear-gradient(90deg,#808080 0 2.500px,transparent 2.500px 5px);"></div>
<svg class="b" style="left:154.9px;top:734.5px;" width="40" height="33" viewBox="0 0 40 33"><path d="M4 31.300H38.300V13" stroke="#4a3c20" stroke-width="2.300" fill="none" opacity=".7"/><path d="M1.200 28V6.500L5.500 1.250H14.600L18.200 7.300H31L35.300 11.500V28Z" fill="#fbfba4" stroke="#d4a035" stroke-width="2.300" stroke-linejoin="round"/><path d="M19 9.600H30.500" stroke="#fff" stroke-width="2"/><path d="M30.500 7.300L35.300 11.800" stroke="#c8703a" stroke-width="2.300"/><rect x="1.200" y="11.600" width="35.300" height="17.600" fill="url(#fg)" stroke="#d4a035" stroke-width="2.300"/>
<rect x="0.100" y="12.500" width="4.300" height="16" fill="#f2bc4e"/><path d="M2.500 29.200H37" stroke="#b8801e" stroke-width="2.600"/><path d="M36.500 13V29.500" stroke="#ad7a1e" stroke-width="2.300"/>
<path d="M10.500 21.300H31" stroke="#ffc49a" stroke-width="2" stroke-dasharray="3.500 3.500"/></svg>
<div class="t" style="top:736.2px;font-size:31.59px;line-height:31.59px;color:#000;left:206.85px;transform:scaleX(0.8520);-webkit-text-stroke:.3px #000;">22.72 Voegwerk</div>
<div class="b" style="left:129px;top:793px;width:26px;height:2px;background:repeating-linear-gradient(90deg,#808080 0 2.500px,transparent 2.500px 5px);"></div>
<svg class="b" style="left:154.9px;top:774.5px;" width="40" height="33" viewBox="0 0 40 33"><path d="M4 31.300H38.300V13" stroke="#4a3c20" stroke-width="2.300" fill="none" opacity=".7"/><path d="M1.200 28V6.500L5.500 1.250H14.600L18.200 7.300H31L35.300 11.500V28Z" fill="#fbfba4" stroke="#d4a035" stroke-width="2.300" stroke-linejoin="round"/><path d="M19 9.600H30.500" stroke="#fff" stroke-width="2"/><path d="M30.500 7.300L35.300 11.800" stroke="#c8703a" stroke-width="2.300"/><rect x="1.200" y="11.600" width="35.300" height="17.600" fill="url(#fg)" stroke="#d4a035" stroke-width="2.300"/>
<rect x="0.100" y="12.500" width="4.300" height="16" fill="#f2bc4e"/><path d="M2.500 29.200H37" stroke="#b8801e" stroke-width="2.600"/><path d="M36.500 13V29.500" stroke="#ad7a1e" stroke-width="2.300"/>
<path d="M10.500 21.300H31" stroke="#ffc49a" stroke-width="2" stroke-dasharray="3.500 3.500"/></svg>
<div class="t" style="top:776.2px;font-size:31.59px;line-height:31.59px;color:#000;left:206.86px;transform:scaleX(0.8507);-webkit-text-stroke:.3px #000;">22.60 Diversen</div>
<div class="b" style="left:93px;top:833px;width:15px;height:2px;background:repeating-linear-gradient(90deg,#808080 0 2.500px,transparent 2.500px 5px);"></div>
<svg class="b" style="left:107.9px;top:814.5px;" width="40" height="33" viewBox="0 0 40 33"><path d="M4 31.300H38.300V13" stroke="#4a3c20" stroke-width="2.300" fill="none" opacity=".7"/><path d="M1.200 28V6.500L5.500 1.250H14.600L18.200 7.300H31L35.300 11.500V28Z" fill="#fbfba4" stroke="#d4a035" stroke-width="2.300" stroke-linejoin="round"/><path d="M19 9.600H30.500" stroke="#fff" stroke-width="2"/><path d="M30.500 7.300L35.300 11.800" stroke="#c8703a" stroke-width="2.300"/><rect x="1.200" y="11.600" width="35.300" height="17.600" fill="url(#fg)" stroke="#d4a035" stroke-width="2.300"/>
<rect x="0.100" y="12.500" width="4.300" height="16" fill="#f2bc4e"/><path d="M2.500 29.200H37" stroke="#b8801e" stroke-width="2.600"/><path d="M36.500 13V29.500" stroke="#ad7a1e" stroke-width="2.300"/>
<path d="M10.500 21.300H31" stroke="#ffc49a" stroke-width="2" stroke-dasharray="3.500 3.500"/></svg>
<svg class="b" style="left:71px;top:822.5px;" width="22" height="22" viewBox="0 0 22 22"><rect x="1.100" y="1.100" width="19.600" height="19.600" rx="2.500" fill="url(#pg)" stroke="#9b9b9b" stroke-width="2.200"/><path d="M5.500 10.900H16.300" stroke="#4a5eb0" stroke-width="2.400"/></svg>
<div class="t" style="top:816.2px;font-size:31.59px;line-height:31.59px;color:#000;left:159.55px;transform:scaleX(0.8526);-webkit-text-stroke:.3px #000;">21 BETONVLOER</div>
<div class="b" style="left:129px;top:873px;width:26px;height:2px;background:repeating-linear-gradient(90deg,#808080 0 2.500px,transparent 2.500px 5px);"></div>
<svg class="b" style="left:154.9px;top:854.5px;" width="40" height="33" viewBox="0 0 40 33"><path d="M4 31.300H38.300V13" stroke="#4a3c20" stroke-width="2.300" fill="none" opacity=".7"/><path d="M1.200 28V6.500L5.500 1.250H14.600L18.200 7.300H31L35.300 11.500V28Z" fill="#fbfba4" stroke="#d4a035" stroke-width="2.300" stroke-linejoin="round"/><path d="M19 9.600H30.500" stroke="#fff" stroke-width="2"/><path d="M30.500 7.300L35.300 11.800" stroke="#c8703a" stroke-width="2.300"/><rect x="1.200" y="11.600" width="35.300" height="17.600" fill="url(#fg)" stroke="#d4a035" stroke-width="2.300"/>
<rect x="0.100" y="12.500" width="4.300" height="16" fill="#f2bc4e"/><path d="M2.500 29.200H37" stroke="#b8801e" stroke-width="2.600"/><path d="M36.500 13V29.500" stroke="#ad7a1e" stroke-width="2.300"/>
<path d="M10.500 21.300H31" stroke="#ffc49a" stroke-width="2" stroke-dasharray="3.500 3.500"/></svg>
<div class="t" style="top:856.2px;font-size:31.59px;line-height:31.59px;color:#000;left:206.87px;transform:scaleX(0.8419);-webkit-text-stroke:.3px #000;">22.51 Metselwerk</div>
<div class="b" style="left:129px;top:913px;width:26px;height:2px;background:repeating-linear-gradient(90deg,#808080 0 2.500px,transparent 2.500px 5px);"></div>
<div class="b" style="left:203px;top:892.7px;width:212.5px;height:39.5px;background:#ededed;"></div>
<svg class="b" style="left:154.9px;top:894.5px;" width="40" height="33" viewBox="0 0 40 33"><path d="M4 31.300H38.300V13" stroke="#4a3c20" stroke-width="2.300" fill="none" opacity=".7"/><path d="M1.200 28V6.500L5.500 1.250H14.600L18.200 7.300H31L35.300 11.500V28Z" fill="#fbfba4" stroke="#d4a035" stroke-width="2.300" stroke-linejoin="round"/><path d="M19 9.600H30.500" stroke="#fff" stroke-width="2"/><path d="M30.500 7.300L35.300 11.800" stroke="#c8703a" stroke-width="2.300"/><path d="M4.800 11.800H36.500L35 29H1.200Z" fill="url(#fg)" stroke="#d4a035" stroke-width="2.300" stroke-linejoin="round"/>
<path d="M1.300 29H35.300" stroke="#b8801e" stroke-width="2.600"/><path d="M36.300 13V29" stroke="#ad7a1e" stroke-width="2.200"/>
<path d="M11 21.300H31" stroke="#ffc49a" stroke-width="2" stroke-dasharray="3.500 3.500"/></svg>
<div class="t" style="top:896.2px;font-size:31.59px;line-height:31.59px;color:#000;left:206.86px;transform:scaleX(0.8464);-webkit-text-stroke:.3px #000;">21.50 Betonwerk</div>
<div class="b" style="left:93px;top:953px;width:15px;height:2px;background:repeating-linear-gradient(90deg,#808080 0 2.500px,transparent 2.500px 5px);"></div>
<svg class="b" style="left:107.9px;top:934.5px;" width="40" height="33" viewBox="0 0 40 33"><path d="M4 31.300H38.300V13" stroke="#4a3c20" stroke-width="2.300" fill="none" opacity=".7"/><path d="M1.200 28V6.500L5.500 1.250H14.600L18.200 7.300H31L35.300 11.500V28Z" fill="#fbfba4" stroke="#d4a035" stroke-width="2.300" stroke-linejoin="round"/><path d="M19 9.600H30.500" stroke="#fff" stroke-width="2"/><path d="M30.500 7.300L35.300 11.800" stroke="#c8703a" stroke-width="2.300"/><rect x="1.200" y="11.600" width="35.300" height="17.600" fill="url(#fg)" stroke="#d4a035" stroke-width="2.300"/>
<rect x="0.100" y="12.500" width="4.300" height="16" fill="#f2bc4e"/><path d="M2.500 29.200H37" stroke="#b8801e" stroke-width="2.600"/><path d="M36.500 13V29.500" stroke="#ad7a1e" stroke-width="2.300"/>
<path d="M10.500 21.300H31" stroke="#ffc49a" stroke-width="2" stroke-dasharray="3.500 3.500"/></svg>
<svg class="b" style="left:71px;top:942.5px;" width="22" height="22" viewBox="0 0 22 22"><rect x="1.100" y="1.100" width="19.600" height="19.600" rx="2.500" fill="url(#pg)" stroke="#9b9b9b" stroke-width="2.200"/><path d="M5.500 10.900H16.300" stroke="#4a5eb0" stroke-width="2.400"/><path d="M10.900 5.500V16.300" stroke="#4a5eb0" stroke-width="2.400"/></svg>
<div class="t" style="top:936.2px;font-size:31.59px;line-height:31.59px;color:#000;left:159.56px;transform:scaleX(0.8488);-webkit-text-stroke:.3px #000;">24 KAPCONSTRUCTIE</div>
<div class="b" style="left:93px;top:993px;width:15px;height:2px;background:repeating-linear-gradient(90deg,#808080 0 2.500px,transparent 2.500px 5px);"></div>
<svg class="b" style="left:107.9px;top:974.5px;" width="40" height="33" viewBox="0 0 40 33"><path d="M4 31.300H38.300V13" stroke="#4a3c20" stroke-width="2.300" fill="none" opacity=".7"/><path d="M1.200 28V6.500L5.500 1.250H14.600L18.200 7.300H31L35.300 11.500V28Z" fill="#fbfba4" stroke="#d4a035" stroke-width="2.300" stroke-linejoin="round"/><path d="M19 9.600H30.500" stroke="#fff" stroke-width="2"/><path d="M30.500 7.300L35.300 11.800" stroke="#c8703a" stroke-width="2.300"/><rect x="1.200" y="11.600" width="35.300" height="17.600" fill="url(#fg)" stroke="#d4a035" stroke-width="2.300"/>
<rect x="0.100" y="12.500" width="4.300" height="16" fill="#f2bc4e"/><path d="M2.500 29.200H37" stroke="#b8801e" stroke-width="2.600"/><path d="M36.500 13V29.500" stroke="#ad7a1e" stroke-width="2.300"/>
<path d="M10.500 21.300H31" stroke="#ffc49a" stroke-width="2" stroke-dasharray="3.500 3.500"/></svg>
<svg class="b" style="left:71px;top:982.5px;" width="22" height="22" viewBox="0 0 22 22"><rect x="1.100" y="1.100" width="19.600" height="19.600" rx="2.500" fill="url(#pg)" stroke="#9b9b9b" stroke-width="2.200"/><path d="M5.500 10.900H16.300" stroke="#4a5eb0" stroke-width="2.400"/><path d="M10.900 5.500V16.300" stroke="#4a5eb0" stroke-width="2.400"/></svg>
<div class="t" style="top:976.2px;font-size:31.59px;line-height:31.59px;color:#000;left:159.95px;transform:scaleX(0.8571);-webkit-text-stroke:.3px #000;">30 BUITENKOZIJNEN</div>
<div class="b" style="left:82px;top:1033px;width:26px;height:2px;background:repeating-linear-gradient(90deg,#808080 0 2.500px,transparent 2.500px 5px);"></div>
<svg class="b" style="left:107.9px;top:1014.5px;" width="40" height="33" viewBox="0 0 40 33"><path d="M4 31.300H38.300V13" stroke="#4a3c20" stroke-width="2.300" fill="none" opacity=".7"/><path d="M1.200 28V6.500L5.500 1.250H14.600L18.200 7.300H31L35.300 11.500V28Z" fill="#fbfba4" stroke="#d4a035" stroke-width="2.300" stroke-linejoin="round"/><path d="M19 9.600H30.500" stroke="#fff" stroke-width="2"/><path d="M30.500 7.300L35.300 11.800" stroke="#c8703a" stroke-width="2.300"/><rect x="1.200" y="11.600" width="35.300" height="17.600" fill="url(#fg)" stroke="#d4a035" stroke-width="2.300"/>
<rect x="0.100" y="12.500" width="4.300" height="16" fill="#f2bc4e"/><path d="M2.500 29.200H37" stroke="#b8801e" stroke-width="2.600"/><path d="M36.500 13V29.500" stroke="#ad7a1e" stroke-width="2.300"/>
<path d="M10.500 21.300H31" stroke="#ffc49a" stroke-width="2" stroke-dasharray="3.500 3.500"/></svg>
<div class="t" style="top:1016.2px;font-size:31.59px;line-height:31.59px;color:#000;left:159.54px;transform:scaleX(0.8637);-webkit-text-stroke:.3px #000;">70 ELEKTRISCHE INSTALLATIE</div>
<svg class="b" style="left:60.9px;top:1054.5px;" width="40" height="33" viewBox="0 0 40 33"><path d="M4 31.300H38.300V13" stroke="#4a3c20" stroke-width="2.300" fill="none" opacity=".7"/><path d="M1.200 28V6.500L5.500 1.250H14.600L18.200 7.300H31L35.300 11.500V28Z" fill="#fbfba4" stroke="#d4a035" stroke-width="2.300" stroke-linejoin="round"/><path d="M19 9.600H30.500" stroke="#fff" stroke-width="2"/><path d="M30.500 7.300L35.300 11.800" stroke="#c8703a" stroke-width="2.300"/><rect x="1.200" y="11.600" width="35.300" height="17.600" fill="url(#fg)" stroke="#d4a035" stroke-width="2.300"/>
<rect x="0.100" y="12.500" width="4.300" height="16" fill="#f2bc4e"/><path d="M2.500 29.200H37" stroke="#b8801e" stroke-width="2.600"/><path d="M36.500 13V29.500" stroke="#ad7a1e" stroke-width="2.300"/>
<path d="M10.500 21.300H31" stroke="#ffc49a" stroke-width="2" stroke-dasharray="3.500 3.500"/></svg>
<div class="t" style="top:1056.2px;font-size:31.59px;line-height:31.59px;color:#000;left:111.43px;transform:scaleX(0.8568);-webkit-text-stroke:.3px #000;">Documenten</div>
<div class="b" style="left:640px;top:407px;width:1265px;height:1812px;background:#e4e4e4;border:2px solid #9c9c9c;border-top:none;"></div>
<div class="b" style="left:640px;top:344px;width:1266px;height:63px;background:#fff;"></div>
<div class="b" style="left:1904px;top:344px;width:14px;height:63px;background:#f0f0f0;"></div>
<div class="b" style="left:1901.2px;top:344px;width:0px;height:0px;"></div>
<div class="b" style="left:640px;top:408px;width:1260px;height:4px;background:#787878;"></div>
<div class="b" style="left:638px;top:408px;width:5px;height:1804px;background:linear-gradient(90deg,#6f6f6f,#8c8c8c 60%,#a5a5a5);"></div>
<div class="b" style="left:644px;top:412px;width:1202px;height:1749px;background:#fff;"></div>
<div class="b" style="left:644px;top:2160px;width:1204px;height:2.5px;background:#8f8f8f;"></div>
<div class="b" style="left:1845px;top:504px;width:2.5px;height:1658px;background:#9a9a9a;"></div>
<div class="b" style="left:644px;top:412px;width:65px;height:95px;background:#e6e6e6;"></div>
<div class="b" style="left:709px;top:412px;width:1137px;height:91px;background:#d3d3d3;"></div>
<div class="b" style="left:709px;top:502.5px;width:1137px;height:5px;background:#217346;"></div>
<div class="b" style="left:903px;top:412px;width:2.5px;height:91px;background:#b5b5b5;"></div>
<div class="b" style="left:940.5px;top:412px;width:2.5px;height:91px;background:#b5b5b5;"></div>
<svg class="b" style="left:670px;top:470px;" width="28" height="28" viewBox="0 0 28 28"><path d="M28 0V27.500H0Z" fill="#bdbdbd"/></svg>
<div class="t" style="top:443.4px;font-size:31.16px;line-height:31.16px;color:#2a8a70;left:715.66px;transform:scaleX(0.8609);">Code</div>
<div class="t" style="top:443.4px;font-size:31.16px;line-height:31.16px;color:#2a8a70;left:912.11px;transform:scaleX(0.8521);">S</div>
<div class="t" style="top:443.4px;font-size:31.16px;line-height:31.16px;color:#2a8a70;left:948.01px;transform:scaleX(0.8454);">Omschrijving</div>
<div class="b" style="left:709px;top:550.1px;width:1136px;height:2px;background:#d6d6d6;"></div>
<div class="b" style="left:644px;top:507px;width:65px;height:45.1px;background:#e6e6e6;border-bottom:2px solid #a8a8a8;border-right:2px solid #a8a8a8;"></div>
<div class="t" style="top:513.4px;font-size:31.88px;line-height:31.88px;color:#000;left:660.24px;transform:scaleX(0.8854);-webkit-text-stroke:.25px #000;">42</div>
<div class="b" style="left:903px;top:507px;width:2.4px;height:43.1px;background:#d6d6d6;"></div>
<div class="b" style="left:940.6px;top:507px;width:2.4px;height:43.1px;background:#d6d6d6;"></div>
<div class="t" style="top:512.5px;font-size:26.67px;line-height:26.67px;color:#000;left:975.8px;transform:scaleX(1.0186);">Voegmortel</div>
<div class="b" style="left:709px;top:595.1px;width:1136px;height:2px;background:#d6d6d6;"></div>
<div class="b" style="left:644px;top:552px;width:65px;height:45.1px;background:#e6e6e6;border-bottom:2px solid #a8a8a8;border-right:2px solid #a8a8a8;"></div>
<div class="t" style="top:558.4px;font-size:31.88px;line-height:31.88px;color:#000;left:660.24px;transform:scaleX(0.8812);-webkit-text-stroke:.25px #000;">43</div>
<div class="b" style="left:903px;top:552px;width:2.4px;height:43.1px;background:#d6d6d6;"></div>
<div class="b" style="left:940.6px;top:552px;width:2.4px;height:43.1px;background:#d6d6d6;"></div>
<div class="t" style="top:557.5px;font-size:26.67px;line-height:26.67px;color:#000;left:975.8px;transform:scaleX(1.0707);">Voegwerk</div>
<div class="b" style="left:709px;top:640.1px;width:1136px;height:2px;background:#d6d6d6;"></div>
<div class="b" style="left:644px;top:597px;width:65px;height:45.1px;background:#e6e6e6;border-bottom:2px solid #a8a8a8;border-right:2px solid #a8a8a8;"></div>
<div class="t" style="top:603.4px;font-size:31.88px;line-height:31.88px;color:#000;left:660.25px;transform:scaleX(0.8688);-webkit-text-stroke:.25px #000;">44</div>
<div class="b" style="left:903px;top:597px;width:2.4px;height:43.1px;background:#d6d6d6;"></div>
<div class="b" style="left:940.6px;top:597px;width:2.4px;height:43.1px;background:#d6d6d6;"></div>
<div class="t" style="top:602.5px;font-size:26.67px;line-height:26.67px;color:#000;left:974.96px;transform:scaleX(1.0524);">Zoutzuur</div>
<div class="b" style="left:709px;top:685.1px;width:1136px;height:2px;background:#d6d6d6;"></div>
<div class="b" style="left:644px;top:642px;width:65px;height:45.1px;background:#e6e6e6;border-bottom:2px solid #a8a8a8;border-right:2px solid #a8a8a8;"></div>
<div class="t" style="top:648.4px;font-size:31.88px;line-height:31.88px;color:#000;left:660.24px;transform:scaleX(0.8812);-webkit-text-stroke:.25px #000;">45</div>
<div class="b" style="left:903px;top:642px;width:2.4px;height:43.1px;background:#d6d6d6;"></div>
<div class="b" style="left:940.6px;top:642px;width:2.4px;height:43.1px;background:#d6d6d6;"></div>
<div class="t" style="top:647.5px;font-size:26.67px;line-height:26.67px;color:#000;left:973.64px;transform:scaleX(1.0129);">Doorstrijken binnenzijde</div>
<div class="b" style="left:709px;top:687px;width:1136px;height:43.1px;background:#a9a9a9;"></div>
<div class="b" style="left:709px;top:730.1px;width:1136px;height:2px;background:#d2d2d2;"></div>
<div class="b" style="left:644px;top:687px;width:65px;height:45.1px;background:#e6e6e6;border-bottom:2px solid #a8a8a8;border-right:2px solid #a8a8a8;"></div>
<div class="t" style="top:693.4px;font-size:31.88px;line-height:31.88px;color:#000;left:660.24px;transform:scaleX(0.8812);-webkit-text-stroke:.25px #000;">46</div>
<div class="b" style="left:903px;top:687px;width:2.4px;height:43.1px;background:#cbcbcb;"></div>
<div class="b" style="left:940.6px;top:687px;width:2.4px;height:43.1px;background:#cbcbcb;"></div>
<div class="t" style="top:692.5px;font-size:26.67px;line-height:26.67px;color:#000;font-weight:bold;left:717.98px;transform:scaleX(1.0255);">22.60</div>
<div class="t" style="top:692.5px;font-size:26.67px;line-height:26.67px;color:#000;font-weight:bold;left:912.58px;transform:scaleX(1.1478);">2</div>
<div class="t" style="top:692.5px;font-size:26.67px;line-height:26.67px;color:#000;font-weight:bold;left:961.68px;transform:scaleX(1.1093);">Diversen</div>
<div class="b" style="left:709px;top:775.1px;width:1136px;height:2px;background:#d6d6d6;"></div>
<div class="b" style="left:644px;top:732px;width:65px;height:45.1px;background:#e6e6e6;border-bottom:2px solid #a8a8a8;border-right:2px solid #a8a8a8;"></div>
<div class="t" style="top:738.4px;font-size:31.88px;line-height:31.88px;color:#000;left:660.24px;transform:scaleX(0.8854);-webkit-text-stroke:.25px #000;">47</div>
<div class="b" style="left:903px;top:732px;width:2.4px;height:43.1px;background:#d6d6d6;"></div>
<div class="b" style="left:940.6px;top:732px;width:2.4px;height:43.1px;background:#d6d6d6;"></div>
<div class="t" style="top:737.5px;font-size:26.67px;line-height:26.67px;color:#000;left:973.59px;transform:scaleX(1.0355);">Dpc folie aansl. metselwerk/fund.</div>
<div class="b" style="left:709px;top:820.1px;width:1136px;height:2px;background:#d6d6d6;"></div>
<div class="b" style="left:644px;top:777px;width:65px;height:45.1px;background:#e6e6e6;border-bottom:2px solid #a8a8a8;border-right:2px solid #a8a8a8;"></div>
<div class="t" style="top:783.4px;font-size:31.88px;line-height:31.88px;color:#000;left:660.24px;transform:scaleX(0.8812);-webkit-text-stroke:.25px #000;">48</div>
<div class="b" style="left:903px;top:777px;width:2.4px;height:43.1px;background:#d6d6d6;"></div>
<div class="b" style="left:940.6px;top:777px;width:2.4px;height:43.1px;background:#d6d6d6;"></div>
<div class="t" style="top:782.5px;font-size:26.67px;line-height:26.67px;color:#000;left:717.97px;transform:scaleX(1.0132);">100020457</div>
<div class="t" style="top:782.5px;font-size:26.67px;line-height:26.67px;color:#000;left:973.62px;transform:scaleX(1.0219);">Rockwool RockSono Base (210) 1200x600x45 mm</div>
<div class="b" style="left:709px;top:865.1px;width:1136px;height:2px;background:#d6d6d6;"></div>
<div class="b" style="left:644px;top:822px;width:65px;height:45.1px;background:#e6e6e6;border-bottom:2px solid #a8a8a8;border-right:2px solid #a8a8a8;"></div>
<div class="t" style="top:828.4px;font-size:31.88px;line-height:31.88px;color:#000;left:660.24px;transform:scaleX(0.8854);-webkit-text-stroke:.25px #000;">49</div>
<div class="b" style="left:903px;top:822px;width:2.4px;height:43.1px;background:#d6d6d6;"></div>
<div class="b" style="left:940.6px;top:822px;width:2.4px;height:43.1px;background:#d6d6d6;"></div>
<div class="t" style="top:825.5px;font-size:20px;line-height:20px;color:#444;left:911.2px;">"</div>
<div class="t" style="top:827.5px;font-size:26.67px;line-height:26.67px;color:#000;left:974.58px;transform:scaleX(1.0145);">Schraagsteiger in norm metselaar</div>
<div class="b" style="left:709px;top:867px;width:1136px;height:43.1px;background:#20b2aa;"></div>
<div class="b" style="left:709px;top:910.1px;width:1136px;height:2px;background:#d2d2d2;"></div>
<div class="b" style="left:644px;top:867px;width:65px;height:45.1px;background:#e6e6e6;border-bottom:2px solid #a8a8a8;border-right:2px solid #a8a8a8;"></div>
<div class="t" style="top:873.4px;font-size:31.88px;line-height:31.88px;color:#000;left:659.66px;transform:scaleX(0.8939);-webkit-text-stroke:.25px #000;">50</div>
<div class="b" style="left:903px;top:867px;width:2.4px;height:43.1px;background:#bfdcda;"></div>
<div class="b" style="left:940.6px;top:867px;width:2.4px;height:43.1px;background:#bfdcda;"></div>
<div class="t" style="top:872.5px;font-size:26.67px;line-height:26.67px;color:#000;font-weight:bold;left:717.98px;transform:scaleX(1.0271);">21</div>
<div class="t" style="top:872.5px;font-size:26.67px;line-height:26.67px;color:#000;font-weight:bold;left:911.59px;transform:scaleX(1.1967);">1</div>
<div class="t" style="top:871.5px;font-size:27.27px;line-height:27.27px;color:#000;left:949.4px;transform:scaleX(0.9624);-webkit-text-stroke:.7px #000;">BETONVLOER</div>
<div class="b" style="left:709px;top:912px;width:1136px;height:43.1px;background:#a9a9a9;"></div>
<div class="b" style="left:709px;top:955.1px;width:1136px;height:2px;background:#d2d2d2;"></div>
<div class="b" style="left:644px;top:912px;width:65px;height:45.1px;background:#e6e6e6;border-bottom:2px solid #a8a8a8;border-right:2px solid #a8a8a8;"></div>
<div class="t" style="top:918.4px;font-size:31.88px;line-height:31.88px;color:#000;left:659.65px;transform:scaleX(0.9027);-webkit-text-stroke:.25px #000;">51</div>
<div class="b" style="left:903px;top:912px;width:2.4px;height:43.1px;background:#cbcbcb;"></div>
<div class="b" style="left:940.6px;top:912px;width:2.4px;height:43.1px;background:#cbcbcb;"></div>
<div class="t" style="top:917.5px;font-size:26.67px;line-height:26.67px;color:#000;font-weight:bold;left:717.98px;transform:scaleX(1.0213);">22.51</div>
<div class="t" style="top:917.5px;font-size:26.67px;line-height:26.67px;color:#000;font-weight:bold;left:912.58px;transform:scaleX(1.1478);">2</div>
<div class="t" style="top:917.5px;font-size:26.67px;line-height:26.67px;color:#000;font-weight:bold;left:962.38px;transform:scaleX(1.1671);">Metselwerk</div>
<div class="b" style="left:709px;top:1000.1px;width:1136px;height:2px;background:#d6d6d6;"></div>
<div class="b" style="left:644px;top:957px;width:65px;height:45.1px;background:#e6e6e6;border-bottom:2px solid #a8a8a8;border-right:2px solid #a8a8a8;"></div>
<div class="t" style="top:963.4px;font-size:31.88px;line-height:31.88px;color:#000;left:659.65px;transform:scaleX(0.9027);-webkit-text-stroke:.25px #000;">52</div>
<div class="b" style="left:903px;top:957px;width:2.4px;height:43.1px;background:#d6d6d6;"></div>
<div class="b" style="left:940.6px;top:957px;width:2.4px;height:43.1px;background:#d6d6d6;"></div>
<div class="t" style="top:962.5px;font-size:26.67px;line-height:26.67px;color:#000;left:974.58px;transform:scaleX(1.0158);">Opmetselen gevelsteen tbv randkist</div>
<div class="b" style="left:709px;top:1045.1px;width:1136px;height:2px;background:#d6d6d6;"></div>
<div class="b" style="left:644px;top:1002px;width:65px;height:45.1px;background:#e6e6e6;border-bottom:2px solid #a8a8a8;border-right:2px solid #a8a8a8;"></div>
<div class="t" style="top:1008.4px;font-size:31.88px;line-height:31.88px;color:#000;left:659.65px;transform:scaleX(0.8983);-webkit-text-stroke:.25px #000;">53</div>
<div class="b" style="left:903px;top:1002px;width:2.4px;height:43.1px;background:#d6d6d6;"></div>
<div class="b" style="left:940.6px;top:1002px;width:2.4px;height:43.1px;background:#d6d6d6;"></div>
<div class="t" style="top:1007.5px;font-size:26.67px;line-height:26.67px;color:#000;left:973.6px;transform:scaleX(1.0332);">Maatvoering</div>
<div class="b" style="left:709px;top:1090.1px;width:1136px;height:2px;background:#d6d6d6;"></div>
<div class="b" style="left:644px;top:1047px;width:65px;height:45.1px;background:#e6e6e6;border-bottom:2px solid #a8a8a8;border-right:2px solid #a8a8a8;"></div>
<div class="t" style="top:1053.4px;font-size:31.88px;line-height:31.88px;color:#000;left:659.67px;transform:scaleX(0.8854);-webkit-text-stroke:.25px #000;">54</div>
<div class="b" style="left:903px;top:1047px;width:2.4px;height:43.1px;background:#d6d6d6;"></div>
<div class="b" style="left:940.6px;top:1047px;width:2.4px;height:43.1px;background:#d6d6d6;"></div>
<div class="t" style="top:1052.5px;font-size:26.67px;line-height:26.67px;color:#000;left:973.61px;transform:scaleX(1.0268);">Metselspecie</div>
<div class="b" style="left:709px;top:1092px;width:1136px;height:43.1px;background:#a9a9a9;"></div>
<div class="b" style="left:709px;top:1135.1px;width:1136px;height:2px;background:#d2d2d2;"></div>
<div class="b" style="left:644px;top:1092px;width:65px;height:45.1px;background:#e6e6e6;border-bottom:2px solid #a8a8a8;border-right:2px solid #a8a8a8;"></div>
<div class="t" style="top:1098.4px;font-size:31.88px;line-height:31.88px;color:#000;left:659.65px;transform:scaleX(0.8983);-webkit-text-stroke:.25px #000;">55</div>
<div class="b" style="left:903px;top:1092px;width:2.4px;height:43.1px;background:#cbcbcb;"></div>
<div class="b" style="left:940.6px;top:1092px;width:2.4px;height:43.1px;background:#cbcbcb;"></div>
<div class="t" style="top:1097.5px;font-size:26.67px;line-height:26.67px;color:#000;font-weight:bold;left:717.98px;transform:scaleX(1.0255);">21.50</div>
<div class="t" style="top:1097.5px;font-size:26.67px;line-height:26.67px;color:#000;font-weight:bold;left:912.58px;transform:scaleX(1.1478);">2</div>
<div class="t" style="top:1097.5px;font-size:26.67px;line-height:26.67px;color:#000;font-weight:bold;left:961.64px;transform:scaleX(1.1301);">Betonwerk</div>
<div class="b" style="left:709px;top:1180.1px;width:1136px;height:2px;background:#d6d6d6;"></div>
<div class="b" style="left:644px;top:1137px;width:65px;height:45.1px;background:#e6e6e6;border-bottom:2px solid #a8a8a8;border-right:2px solid #a8a8a8;"></div>
<div class="t" style="top:1143.4px;font-size:31.88px;line-height:31.88px;color:#000;left:659.65px;transform:scaleX(0.8983);-webkit-text-stroke:.25px #000;">56</div>
<div class="b" style="left:903px;top:1137px;width:2.4px;height:43.1px;background:#d6d6d6;"></div>
<div class="b" style="left:940.6px;top:1137px;width:2.4px;height:43.1px;background:#d6d6d6;"></div>
<div class="t" style="top:1142.5px;font-size:26.67px;line-height:26.67px;color:#000;left:973.59px;transform:scaleX(1.0365);">Egaliseren + storten werkvloer</div>
<div class="b" style="left:709px;top:1225.1px;width:1136px;height:2px;background:#d6d6d6;"></div>
<div class="b" style="left:644px;top:1182px;width:65px;height:45.1px;background:#e6e6e6;border-bottom:2px solid #a8a8a8;border-right:2px solid #a8a8a8;"></div>
<div class="t" style="top:1188.4px;font-size:31.88px;line-height:31.88px;color:#000;left:659.65px;transform:scaleX(0.9027);-webkit-text-stroke:.25px #000;">57</div>
<div class="b" style="left:903px;top:1182px;width:2.4px;height:43.1px;background:#d6d6d6;"></div>
<div class="b" style="left:940.6px;top:1182px;width:2.4px;height:43.1px;background:#d6d6d6;"></div>
<div class="t" style="top:1187.5px;font-size:26.67px;line-height:26.67px;color:#000;left:975.8px;transform:scaleX(1.0064);">Wapeningsnetten 4.5kg/m2</div>
<div class="b" style="left:709px;top:1270.1px;width:1136px;height:2px;background:#d2d2d2;"></div>
<div class="b" style="left:644px;top:1227px;width:65px;height:45.1px;background:#e6e6e6;border-bottom:2px solid #a8a8a8;border-right:2px solid #a8a8a8;"></div>
<div class="b" style="left:644px;top:1227px;width:65px;height:43.1px;background:#d2eedd;"></div>
<div class="b" style="left:705.5px;top:1227px;width:4px;height:43.1px;background:#217346;"></div>
<div class="t" style="top:1233.4px;font-size:31.88px;line-height:31.88px;color:#2a8a70;left:659.65px;transform:scaleX(0.8983);-webkit-text-stroke:.25px #2a8a70;">58</div>
<div class="b" style="left:903px;top:1227px;width:2.4px;height:43.1px;background:#d6d6d6;"></div>
<div class="b" style="left:940.6px;top:1227px;width:2.4px;height:43.1px;background:#d6d6d6;"></div>
<div class="b" style="left:905.4px;top:1227px;width:940.5px;height:43.1px;background:#d3d3d3;"></div>
<div class="b" style="left:940.6px;top:1227px;width:2.4px;height:43.1px;background:#bdbdbd;"></div>
<div class="t" style="top:1232.5px;font-size:26.67px;line-height:26.67px;color:#555;left:973.61px;transform:scaleX(1.0263);">Beton incl. verlies</div>
<div class="b" style="left:709px;top:1315.1px;width:1136px;height:2px;background:#d6d6d6;"></div>
<div class="b" style="left:644px;top:1272px;width:65px;height:45.1px;background:#e6e6e6;border-bottom:2px solid #a8a8a8;border-right:2px solid #a8a8a8;"></div>
<div class="t" style="top:1278.4px;font-size:31.88px;line-height:31.88px;color:#000;left:659.65px;transform:scaleX(0.9027);-webkit-text-stroke:.25px #000;">59</div>
<div class="b" style="left:903px;top:1272px;width:2.4px;height:43.1px;background:#d6d6d6;"></div>
<div class="b" style="left:940.6px;top:1272px;width:2.4px;height:43.1px;background:#d6d6d6;"></div>
<div class="t" style="top:1277.5px;font-size:26.67px;line-height:26.67px;color:#000;left:973.54px;transform:scaleX(1.0583);">Direct afwerken vloer</div>
<div class="b" style="left:709px;top:1360.1px;width:1136px;height:2px;background:#d6d6d6;"></div>
<div class="b" style="left:644px;top:1317px;width:65px;height:45.1px;background:#e6e6e6;border-bottom:2px solid #a8a8a8;border-right:2px solid #a8a8a8;"></div>
<div class="t" style="top:1323.4px;font-size:31.88px;line-height:31.88px;color:#000;left:659.36px;transform:scaleX(0.9027);-webkit-text-stroke:.25px #000;">60</div>
<div class="b" style="left:903px;top:1317px;width:2.4px;height:43.1px;background:#d6d6d6;"></div>
<div class="b" style="left:940.6px;top:1317px;width:2.4px;height:43.1px;background:#d6d6d6;"></div>
<div class="t" style="top:1322.5px;font-size:26.67px;line-height:26.67px;color:#000;left:973.57px;transform:scaleX(1.0429);">Kraanuren</div>
<div class="b" style="left:709px;top:1362px;width:1136px;height:43.1px;background:#20b2aa;"></div>
<div class="b" style="left:709px;top:1405.1px;width:1136px;height:2px;background:#d2d2d2;"></div>
<div class="b" style="left:644px;top:1362px;width:65px;height:45.1px;background:#e6e6e6;border-bottom:2px solid #a8a8a8;border-right:2px solid #a8a8a8;"></div>
<div class="t" style="top:1368.4px;font-size:31.88px;line-height:31.88px;color:#000;left:659.35px;transform:scaleX(0.9116);-webkit-text-stroke:.25px #000;">61</div>
<div class="b" style="left:903px;top:1362px;width:2.4px;height:43.1px;background:#bfdcda;"></div>
<div class="b" style="left:940.6px;top:1362px;width:2.4px;height:43.1px;background:#bfdcda;"></div>
<div class="t" style="top:1367.5px;font-size:26.67px;line-height:26.67px;color:#000;font-weight:bold;left:718px;">24</div>
<div class="t" style="top:1367.5px;font-size:26.67px;line-height:26.67px;color:#000;font-weight:bold;left:911.59px;transform:scaleX(1.1967);">1</div>
<div class="t" style="top:1366.5px;font-size:27.27px;line-height:27.27px;color:#000;left:949.28px;transform:scaleX(0.9708);-webkit-text-stroke:.7px #000;">KAPCONSTRUCTIE</div>
<div class="b" style="left:709px;top:1407px;width:1136px;height:43.1px;background:#a9a9a9;"></div>
<div class="b" style="left:709px;top:1450.1px;width:1136px;height:2px;background:#d2d2d2;"></div>
<div class="b" style="left:644px;top:1407px;width:65px;height:45.1px;background:#e6e6e6;border-bottom:2px solid #a8a8a8;border-right:2px solid #a8a8a8;"></div>
<div class="t" style="top:1413.4px;font-size:31.88px;line-height:31.88px;color:#000;left:659.35px;transform:scaleX(0.9116);-webkit-text-stroke:.25px #000;">62</div>
<div class="b" style="left:903px;top:1407px;width:2.4px;height:43.1px;background:#cbcbcb;"></div>
<div class="b" style="left:940.6px;top:1407px;width:2.4px;height:43.1px;background:#cbcbcb;"></div>
<div class="t" style="top:1412.5px;font-size:26.67px;line-height:26.67px;color:#000;font-weight:bold;left:717.98px;transform:scaleX(1.0213);">24.31</div>
<div class="t" style="top:1412.5px;font-size:26.67px;line-height:26.67px;color:#000;font-weight:bold;left:912.58px;transform:scaleX(1.1478);">2</div>
<div class="t" style="top:1412.5px;font-size:26.67px;line-height:26.67px;color:#000;font-weight:bold;left:964.09px;transform:scaleX(1.1559);">Timmerwerk</div>
<div class="b" style="left:709px;top:1495.1px;width:1136px;height:2px;background:#d6d6d6;"></div>
<div class="b" style="left:644px;top:1452px;width:65px;height:45.1px;background:#e6e6e6;border-bottom:2px solid #a8a8a8;border-right:2px solid #a8a8a8;"></div>
<div class="t" style="top:1458.4px;font-size:31.88px;line-height:31.88px;color:#000;left:659.35px;transform:scaleX(0.9071);-webkit-text-stroke:.25px #000;">63</div>
<div class="b" style="left:903px;top:1452px;width:2.4px;height:43.1px;background:#d6d6d6;"></div>
<div class="b" style="left:940.6px;top:1452px;width:2.4px;height:43.1px;background:#d6d6d6;"></div>
<div class="t" style="top:1457.5px;font-size:26.67px;line-height:26.67px;color:#000;left:973.67px;">Dakbalkjes afm. 50x125mm</div>
<div class="b" style="left:709px;top:1540.1px;width:1136px;height:2px;background:#d6d6d6;"></div>
<div class="b" style="left:644px;top:1497px;width:65px;height:45.1px;background:#e6e6e6;border-bottom:2px solid #a8a8a8;border-right:2px solid #a8a8a8;"></div>
<div class="t" style="top:1503.4px;font-size:31.88px;line-height:31.88px;color:#000;left:659.37px;transform:scaleX(0.8939);-webkit-text-stroke:.25px #000;">64</div>
<div class="b" style="left:903px;top:1497px;width:2.4px;height:43.1px;background:#d6d6d6;"></div>
<div class="b" style="left:940.6px;top:1497px;width:2.4px;height:43.1px;background:#d6d6d6;"></div>
<div class="t" style="top:1502.5px;font-size:26.67px;line-height:26.67px;color:#000;left:974.71px;transform:scaleX(1.0256);">"BAT" balkdragers</div>
<div class="b" style="left:709px;top:1585.1px;width:1136px;height:2px;background:#d6d6d6;"></div>
<div class="b" style="left:644px;top:1542px;width:65px;height:45.1px;background:#e6e6e6;border-bottom:2px solid #a8a8a8;border-right:2px solid #a8a8a8;"></div>
<div class="t" style="top:1548.4px;font-size:31.88px;line-height:31.88px;color:#000;left:659.35px;transform:scaleX(0.9071);-webkit-text-stroke:.25px #000;">65</div>
<div class="b" style="left:903px;top:1542px;width:2.4px;height:43.1px;background:#d6d6d6;"></div>
<div class="b" style="left:940.6px;top:1542px;width:2.4px;height:43.1px;background:#d6d6d6;"></div>
<div class="t" style="top:1547.5px;font-size:26.67px;line-height:26.67px;color:#000;left:974.54px;transform:scaleX(1.0470);">Opwaaiankers</div>
<div class="b" style="left:709px;top:1630.1px;width:1136px;height:2px;background:#d6d6d6;"></div>
<div class="b" style="left:644px;top:1587px;width:65px;height:45.1px;background:#e6e6e6;border-bottom:2px solid #a8a8a8;border-right:2px solid #a8a8a8;"></div>
<div class="t" style="top:1593.4px;font-size:31.88px;line-height:31.88px;color:#000;left:659.35px;transform:scaleX(0.9071);-webkit-text-stroke:.25px #000;">66</div>
<div class="b" style="left:903px;top:1587px;width:2.4px;height:43.1px;background:#d6d6d6;"></div>
<div class="b" style="left:940.6px;top:1587px;width:2.4px;height:43.1px;background:#d6d6d6;"></div>
<div class="t" style="top:1592.5px;font-size:26.67px;line-height:26.67px;color:#000;left:973.64px;transform:scaleX(1.0145);">Eternite golfplaten excl. hulpstukken</div>
<div class="b" style="left:709px;top:1632px;width:1136px;height:43.1px;background:#a9a9a9;"></div>
<div class="b" style="left:709px;top:1675.1px;width:1136px;height:2px;background:#d2d2d2;"></div>
<div class="b" style="left:644px;top:1632px;width:65px;height:45.1px;background:#e6e6e6;border-bottom:2px solid #a8a8a8;border-right:2px solid #a8a8a8;"></div>
<div class="t" style="top:1638.4px;font-size:31.88px;line-height:31.88px;color:#000;left:659.35px;transform:scaleX(0.9116);-webkit-text-stroke:.25px #000;">67</div>
<div class="b" style="left:903px;top:1632px;width:2.4px;height:43.1px;background:#cbcbcb;"></div>
<div class="b" style="left:940.6px;top:1632px;width:2.4px;height:43.1px;background:#cbcbcb;"></div>
<div class="t" style="top:1637.5px;font-size:26.67px;line-height:26.67px;color:#000;font-weight:bold;left:717.97px;transform:scaleX(1.0370);">50</div>
<div class="t" style="top:1637.5px;font-size:26.67px;line-height:26.67px;color:#000;font-weight:bold;left:912.58px;transform:scaleX(1.1478);">2</div>
<div class="t" style="top:1637.5px;font-size:26.67px;line-height:26.67px;color:#000;font-weight:bold;left:962.67px;transform:scaleX(0.9958);">H.W.A.</div>
<div class="b" style="left:709px;top:1720.1px;width:1136px;height:2px;background:#d6d6d6;"></div>
<div class="b" style="left:644px;top:1677px;width:65px;height:45.1px;background:#e6e6e6;border-bottom:2px solid #a8a8a8;border-right:2px solid #a8a8a8;"></div>
<div class="t" style="top:1683.4px;font-size:31.88px;line-height:31.88px;color:#000;left:659.35px;transform:scaleX(0.9071);-webkit-text-stroke:.25px #000;">68</div>
<div class="b" style="left:903px;top:1677px;width:2.4px;height:43.1px;background:#d6d6d6;"></div>
<div class="b" style="left:940.6px;top:1677px;width:2.4px;height:43.1px;background:#d6d6d6;"></div>
<div class="t" style="top:1682.5px;font-size:26.67px;line-height:26.67px;color:#000;left:974.42px;transform:scaleX(1.0382);">Goot en hemelwaterafvoer</div>
<div class="b" style="left:709px;top:1722px;width:1136px;height:43.1px;background:#20b2aa;"></div>
<div class="b" style="left:709px;top:1765.1px;width:1136px;height:2px;background:#d2d2d2;"></div>
<div class="b" style="left:644px;top:1722px;width:65px;height:45.1px;background:#e6e6e6;border-bottom:2px solid #a8a8a8;border-right:2px solid #a8a8a8;"></div>
<div class="t" style="top:1728.4px;font-size:31.88px;line-height:31.88px;color:#000;left:659.35px;transform:scaleX(0.9116);-webkit-text-stroke:.25px #000;">69</div>
<div class="b" style="left:903px;top:1722px;width:2.4px;height:43.1px;background:#bfdcda;"></div>
<div class="b" style="left:940.6px;top:1722px;width:2.4px;height:43.1px;background:#bfdcda;"></div>
<div class="t" style="top:1727.5px;font-size:26.67px;line-height:26.67px;color:#000;font-weight:bold;left:718.25px;transform:scaleX(1.0271);">30</div>
<div class="t" style="top:1727.5px;font-size:26.67px;line-height:26.67px;color:#000;font-weight:bold;left:911.59px;transform:scaleX(1.1967);">1</div>
<div class="t" style="top:1726.5px;font-size:27.27px;line-height:27.27px;color:#000;left:949.43px;transform:scaleX(0.9477);-webkit-text-stroke:.7px #000;">BUITENKOZIJNEN</div>
<div class="b" style="left:709px;top:1767px;width:1136px;height:43.1px;background:#a9a9a9;"></div>
<div class="b" style="left:709px;top:1810.1px;width:1136px;height:2px;background:#d2d2d2;"></div>
<div class="b" style="left:644px;top:1767px;width:65px;height:45.1px;background:#e6e6e6;border-bottom:2px solid #a8a8a8;border-right:2px solid #a8a8a8;"></div>
<div class="t" style="top:1773.4px;font-size:31.88px;line-height:31.88px;color:#000;left:659.36px;transform:scaleX(0.9027);-webkit-text-stroke:.25px #000;">70</div>
<div class="b" style="left:903px;top:1767px;width:2.4px;height:43.1px;background:#cbcbcb;"></div>
<div class="b" style="left:940.6px;top:1767px;width:2.4px;height:43.1px;background:#cbcbcb;"></div>
<div class="t" style="top:1772.5px;font-size:26.67px;line-height:26.67px;color:#000;font-weight:bold;left:718.26px;transform:scaleX(1.0213);">30.33</div>
<div class="t" style="top:1772.5px;font-size:26.67px;line-height:26.67px;color:#000;font-weight:bold;left:912.58px;transform:scaleX(1.1478);">2</div>
<div class="t" style="top:1772.5px;font-size:26.67px;line-height:26.67px;color:#000;font-weight:bold;left:964.09px;transform:scaleX(1.1533);">Timmerwerk</div>
<div class="b" style="left:709px;top:1855.1px;width:1136px;height:2px;background:#d6d6d6;"></div>
<div class="b" style="left:644px;top:1812px;width:65px;height:45.1px;background:#e6e6e6;border-bottom:2px solid #a8a8a8;border-right:2px solid #a8a8a8;"></div>
<div class="t" style="top:1818.4px;font-size:31.88px;line-height:31.88px;color:#000;left:659.35px;transform:scaleX(0.9116);-webkit-text-stroke:.25px #000;">71</div>
<div class="b" style="left:903px;top:1812px;width:2.4px;height:43.1px;background:#d6d6d6;"></div>
<div class="b" style="left:940.6px;top:1812px;width:2.4px;height:43.1px;background:#d6d6d6;"></div>
<div class="t" style="top:1817.5px;font-size:26.67px;line-height:26.67px;color:#000;left:973.63px;transform:scaleX(1.0157);">Deurkozijn</div>
<div class="b" style="left:709px;top:1900.1px;width:1136px;height:2px;background:#d6d6d6;"></div>
<div class="b" style="left:644px;top:1857px;width:65px;height:45.1px;background:#e6e6e6;border-bottom:2px solid #a8a8a8;border-right:2px solid #a8a8a8;"></div>
<div class="t" style="top:1863.4px;font-size:31.88px;line-height:31.88px;color:#000;left:659.35px;transform:scaleX(0.9116);-webkit-text-stroke:.25px #000;">72</div>
<div class="b" style="left:903px;top:1857px;width:2.4px;height:43.1px;background:#d6d6d6;"></div>
<div class="b" style="left:940.6px;top:1857px;width:2.4px;height:43.1px;background:#d6d6d6;"></div>
<div class="t" style="top:1862.5px;font-size:26.67px;line-height:26.67px;color:#000;left:973.59px;transform:scaleX(1.0381);">Bergingsdeur</div>
<div class="b" style="left:709px;top:1902px;width:1136px;height:43.1px;background:#a9a9a9;"></div>
<div class="b" style="left:709px;top:1945.1px;width:1136px;height:2px;background:#d2d2d2;"></div>
<div class="b" style="left:644px;top:1902px;width:65px;height:45.1px;background:#e6e6e6;border-bottom:2px solid #a8a8a8;border-right:2px solid #a8a8a8;"></div>
<div class="t" style="top:1908.4px;font-size:31.88px;line-height:31.88px;color:#000;left:659.35px;transform:scaleX(0.9071);-webkit-text-stroke:.25px #000;">73</div>
<div class="b" style="left:903px;top:1902px;width:2.4px;height:43.1px;background:#cbcbcb;"></div>
<div class="b" style="left:940.6px;top:1902px;width:2.4px;height:43.1px;background:#cbcbcb;"></div>
<div class="t" style="top:1907.5px;font-size:26.67px;line-height:26.67px;color:#000;font-weight:bold;left:718.26px;transform:scaleX(1.0213);">30.80</div>
<div class="t" style="top:1907.5px;font-size:26.67px;line-height:26.67px;color:#000;font-weight:bold;left:912.58px;transform:scaleX(1.1478);">2</div>
<div class="t" style="top:1907.5px;font-size:26.67px;line-height:26.67px;color:#000;font-weight:bold;left:961.68px;transform:scaleX(1.1084);">Diversen</div>
<div class="b" style="left:709px;top:1990.1px;width:1136px;height:2px;background:#d6d6d6;"></div>
<div class="b" style="left:644px;top:1947px;width:65px;height:45.1px;background:#e6e6e6;border-bottom:2px solid #a8a8a8;border-right:2px solid #a8a8a8;"></div>
<div class="t" style="top:1953.4px;font-size:31.88px;line-height:31.88px;color:#000;left:659.37px;transform:scaleX(0.8939);-webkit-text-stroke:.25px #000;">74</div>
<div class="b" style="left:903px;top:1947px;width:2.4px;height:43.1px;background:#d6d6d6;"></div>
<div class="b" style="left:940.6px;top:1947px;width:2.4px;height:43.1px;background:#d6d6d6;"></div>
<div class="t" style="top:1952.5px;font-size:26.67px;line-height:26.67px;color:#000;left:973.59px;transform:scaleX(1.0360);">Hang-en sluitwerk bergingsdeur</div>
<div class="b" style="left:709px;top:2035.1px;width:1136px;height:2px;background:#d6d6d6;"></div>
<div class="b" style="left:644px;top:1992px;width:65px;height:45.1px;background:#e6e6e6;border-bottom:2px solid #a8a8a8;border-right:2px solid #a8a8a8;"></div>
<div class="t" style="top:1998.4px;font-size:31.88px;line-height:31.88px;color:#000;left:659.35px;transform:scaleX(0.9071);-webkit-text-stroke:.25px #000;">75</div>
<div class="b" style="left:903px;top:1992px;width:2.4px;height:43.1px;background:#d6d6d6;"></div>
<div class="b" style="left:940.6px;top:1992px;width:2.4px;height:43.1px;background:#d6d6d6;"></div>
<div class="t" style="top:1997.5px;font-size:26.67px;line-height:26.67px;color:#000;left:974.56px;transform:scaleX(1.0342);">Schilderwerk + beglazing</div>
<div class="b" style="left:709px;top:2037px;width:1136px;height:43.1px;background:#20b2aa;"></div>
<div class="b" style="left:709px;top:2080.1px;width:1136px;height:2px;background:#d2d2d2;"></div>
<div class="b" style="left:644px;top:2037px;width:65px;height:45.1px;background:#e6e6e6;border-bottom:2px solid #a8a8a8;border-right:2px solid #a8a8a8;"></div>
<div class="t" style="top:2043.4px;font-size:31.88px;line-height:31.88px;color:#000;left:659.35px;transform:scaleX(0.9071);-webkit-text-stroke:.25px #000;">76</div>
<div class="b" style="left:903px;top:2037px;width:2.4px;height:43.1px;background:#bfdcda;"></div>
<div class="b" style="left:940.6px;top:2037px;width:2.4px;height:43.1px;background:#bfdcda;"></div>
<div class="t" style="top:2042.5px;font-size:26.67px;line-height:26.67px;color:#000;font-weight:bold;left:717.68px;transform:scaleX(1.0470);">70</div>
<div class="t" style="top:2042.5px;font-size:26.67px;line-height:26.67px;color:#000;font-weight:bold;left:911.59px;transform:scaleX(1.1967);">1</div>
<div class="t" style="top:2041.5px;font-size:27.27px;line-height:27.27px;color:#000;left:949.36px;transform:scaleX(0.9806);-webkit-text-stroke:.7px #000;">ELEKTRISCHE INSTALLATIE</div>
<div class="b" style="left:709px;top:2125.1px;width:1136px;height:2px;background:#d6d6d6;"></div>
<div class="b" style="left:644px;top:2082px;width:65px;height:45.1px;background:#e6e6e6;border-bottom:2px solid #a8a8a8;border-right:2px solid #a8a8a8;"></div>
<div class="t" style="top:2088.4px;font-size:31.88px;line-height:31.88px;color:#000;left:659.35px;transform:scaleX(0.9116);-webkit-text-stroke:.25px #000;">77</div>
<div class="b" style="left:903px;top:2082px;width:2.4px;height:43.1px;background:#d6d6d6;"></div>
<div class="b" style="left:940.6px;top:2082px;width:2.4px;height:43.1px;background:#d6d6d6;"></div>
<div class="t" style="top:2087.5px;font-size:26.67px;line-height:26.67px;color:#000;left:718.07px;transform:scaleX(0.9396);">STELPOST</div>
<div class="t" style="top:2087.5px;font-size:26.67px;line-height:26.67px;color:#000;left:913px;transform:scaleX(1.1277);">A</div>
<div class="t" style="top:2087.5px;font-size:26.67px;line-height:26.67px;color:#000;left:960.85px;transform:scaleX(1.0061);">Elektra in berging</div>
<div class="b" style="left:709px;top:1227.1px;width:1137px;height:42.8px;border:5px solid #0000ff;border-right:none;"></div>
<div class="b" style="left:1847.5px;top:412px;width:52.5px;height:1750px;background:#e6e6e6;"></div>
<div class="b" style="left:1853px;top:458px;width:37px;height:1667px;background:#dcdcdc;"></div>
<div class="b" style="left:1846px;top:412.5px;width:52px;height:9px;background:#e9e9e9;border:2px solid #9a9a9a;"></div>
<div class="b" style="left:1853.5px;top:423.5px;width:36px;height:35.5px;background:#fff;border:2px solid #a6a6a6;"></div>
<svg class="b" style="left:1860.5px;top:436px;" width="23" height="13" viewBox="0 0 23 13"><path d="M0 12.500H22.500L11.250 0.500Z" fill="#808080"/></svg>
<div class="b" style="left:1853.5px;top:1335px;width:36px;height:787px;background:#fff;border:2px solid #a6a6a6;"></div>
<div class="b" style="left:1853.5px;top:2124.5px;width:36px;height:34.5px;background:#fff;border:2px solid #a6a6a6;"></div>
<svg class="b" style="left:1860.5px;top:2135px;" width="23" height="13" viewBox="0 0 23 13"><path d="M0 0.500H22.500L11.250 12.500Z" fill="#808080"/></svg>
<div class="b" style="left:653px;top:2169px;width:1192px;height:35.5px;background:#dcdcdc;"></div>
<div class="b" style="left:644px;top:2162px;width:8px;height:49.5px;background:#e6e6e6;border:1.500px solid #a0a0a0;"></div>
<div class="b" style="left:653.5px;top:2168.5px;width:37px;height:36px;background:#fff;border:2px solid #a6a6a6;"></div>
<svg class="b" style="left:666px;top:2175.5px;" width="13" height="23" viewBox="0 0 13 23"><path d="M12.500 0V22.500L0.500 11.250Z" fill="#808080"/></svg>
<div class="b" style="left:690px;top:2168.5px;width:387.5px;height:36px;background:#fff;border:2px solid #a6a6a6;"></div>
<div class="b" style="left:1808.5px;top:2168.5px;width:36.5px;height:36px;background:#fff;border:2px solid #a6a6a6;"></div>
<svg class="b" style="left:1820.5px;top:2175.5px;" width="13" height="23" viewBox="0 0 13 23"><path d="M0.500 0V22.500L12.500 11.250Z" fill="#808080"/></svg>
<div class="b" style="left:1905px;top:407px;width:13px;height:1872px;background:#efefef;"></div>
<div class="b" style="left:0px;top:2219px;width:1918px;height:60px;background:#efefef;"></div>
<div class="b" style="left:0px;top:2219px;width:1598px;height:60px;background:#405e5c;"></div>
<svg class="b" style="left:0px;top:2234px;" width="36" height="36" viewBox="0 0 36 36"><path d="M0 0H25L35 10V35H0Z" fill="#f4f4f4"/><rect x="15" y="5" width="5.500" height="5.500" fill="#405e5c"/><path d="M6 17H25V12" stroke="#405e5c" stroke-width="4" fill="none"/><rect x="10.500" y="25" width="15" height="4.500" fill="#405e5c"/></svg>
<div class="t" style="top:2238.3px;font-size:31.88px;line-height:31.88px;color:#fff;left:485.07px;transform:scaleX(0.8313);">YasperKuiper</div>
<div class="t" style="top:2238.3px;font-size:31.88px;line-height:31.88px;color:#fff;left:665.46px;transform:scaleX(0.8431);">XTB</div>
<div class="t" style="top:2238.3px;font-size:31.88px;line-height:31.88px;color:#fff;left:739.81px;transform:scaleX(0.8574);">EUR</div>
<div class="t" style="top:2238.3px;font-size:31.88px;line-height:31.88px;color:#fff;left:820px;transform:scaleX(0.8369);">Uurloon: € 45,00</div>
<div class="t" style="top:2238.3px;font-size:31.88px;line-height:31.88px;color:#fff;left:1041px;transform:scaleX(0.8416);">Vorig totaal: € 32.005,03</div>
<div class="b" style="left:1353.8px;top:2225px;width:244.2px;height:54px;overflow:hidden"><div class="t" style="left:0;top:13.3px;font-size:31.880px;line-height:31.880px;color:#fff;transform:scaleX(0.8335)">Actueel totaal: € 32.005,03</div></div>
<div class="b" style="left:1918px;top:344px;width:1915px;height:1935px;background:#fbfbfb;"></div>
<div class="b" style="left:1918.5px;top:343px;width:1920px;height:42px;background:#fff;border:2.400px solid #ababab;"></div>
<div class="t" style="top:348.9px;font-size:31.16px;line-height:31.16px;color:#555;left:1925.94px;transform:scaleX(0.9838);">Ibis voor Milieu Impact</div>
<svg class="b" style="left:3763px;top:352px;" width="18" height="26" viewBox="0 0 18 26"><rect x="3.600" y="1.200" width="10.600" height="14.500" fill="#fff" stroke="#999" stroke-width="2.400"/><rect x="9.500" y="1" width="5.500" height="15" fill="#999"/><path d="M0 16H17.500" stroke="#999" stroke-width="2.600"/><path d="M8 17V25.500" stroke="#999" stroke-width="2.400"/></svg>
<svg class="b" style="left:3803px;top:355px;" width="21" height="20" viewBox="0 0 21 20"><path d="M2 2L18.500 18M18.500 2L2 18" stroke="#999" stroke-width="5" fill="none"/></svg>
<div class="t" style="top:457.5px;font-size:61.59px;line-height:61.59px;color:#3d3d3d;left:1976.37px;">Milieukaarten</div>
<svg class="b" style="left:3683px;top:492px;" width="33" height="32" viewBox="0 0 33 32"><path d="M3 3L29.500 28.500M29.500 3L3 28.500" stroke="#333" stroke-width="5.600" fill="none"/></svg>
<div class="b" style="left:1978px;top:597.5px;width:495px;height:90px;background:#88d4cf;border-radius:9px;"></div>
<svg class="b" style="left:2019px;top:626px;" width="29" height="29" viewBox="0 0 29 29"><path d="M14.250 0V28.500M0 14.250H28.500" stroke="#111" stroke-width="4.600" fill="none"/></svg>
<div class="t" style="top:623.3px;font-size:35.51px;line-height:35.51px;color:#101010;left:2086.57px;transform:scaleX(1.0318);-webkit-text-stroke:1px #101010;">Maak milieukaart aan</div>
<div class="b" style="left:2563px;top:625.5px;width:90px;height:34.5px;background:#9eabaa;border-radius:17.250px;"></div>
<div class="b" style="left:2605.5px;top:617px;width:50px;height:50px;background:#405e5c;border-radius:25px;box-shadow:0 3px 5px rgba(0,0,0,.28);"></div>
<div class="b" style="left:2972.5px;top:625.5px;width:90px;height:34.5px;background:#9eabaa;border-radius:17.250px;"></div>
<div class="b" style="left:3015px;top:617px;width:50px;height:50px;background:#405e5c;border-radius:25px;box-shadow:0 3px 5px rgba(0,0,0,.28);"></div>
<div class="t" style="top:573.3px;font-size:34.78px;line-height:34.78px;color:#525252;left:2679.7px;transform:scaleX(1.0288);">Afronden op</div>
<div class="t" style="top:622.7px;font-size:34.78px;line-height:34.78px;color:#525252;left:2678.7px;transform:scaleX(1.0373);">2 decimalen</div>
<div class="t" style="top:672.5px;font-size:34.78px;line-height:34.78px;color:#525252;left:2679.08px;transform:scaleX(1.0196);">aan</div>
<div class="t" style="top:573.3px;font-size:34.78px;line-height:34.78px;color:#525252;left:3086.25px;transform:scaleX(1.0044);">Gebruik</div>
<div class="t" style="top:622.7px;font-size:34.78px;line-height:34.78px;color:#525252;left:3085.69px;transform:scaleX(1.0230);">levensduur van</div>
<div class="t" style="top:672.5px;font-size:34.78px;line-height:34.78px;color:#525252;left:3086.52px;transform:scaleX(1.0656);">calculatie</div>
<div class="b" style="left:3329.5px;top:599px;width:447px;height:97.5px;background:#fbfbfb;border:2px solid #ececec;border-radius:9px;"></div>
<div class="b" style="left:3358px;top:594px;width:128px;height:12px;background:#fbfbfb;"></div>
<div class="t" style="top:583.7px;font-size:31.45px;line-height:31.45px;color:#505050;left:3371.88px;transform:scaleX(0.9711);">Zoeken</div>
<svg class="b" style="left:3370px;top:625px;" width="44" height="44" viewBox="0 0 44 44"><circle cx="15.500" cy="15.500" r="12.800" fill="none" stroke="#666" stroke-width="4.400"/><path d="M25 25L42 42" stroke="#666" stroke-width="5"/></svg>
<div class="b" style="left:1979px;top:738px;width:1797.5px;height:1319.5px;background:#fff;border:2px solid #dcdcdc;border-radius:8px;box-shadow:0 1px 2px rgba(0,0,0,.06);"></div>
<div class="b" style="left:1981px;top:740px;width:1769.6px;height:88.5px;background:#dbf4f4;border-radius:6px 0 0 0;"></div>
<div class="b" style="left:1981px;top:828px;width:1769.6px;height:2.5px;background:#d9d9d9;"></div>
<div class="t" style="top:767px;font-size:33.33px;line-height:33.33px;color:#3f4646;left:1999.37px;transform:scaleX(0.9783);-webkit-text-stroke:.8px #3f4646;">Code</div>
<div class="t" style="top:767px;font-size:33.33px;line-height:33.33px;color:#3f4646;left:2258.97px;transform:scaleX(1.0208);-webkit-text-stroke:.8px #3f4646;">Omschrijving</div>
<div class="t" style="top:767px;font-size:33.33px;line-height:33.33px;color:#3f4646;left:2925.39px;transform:scaleX(0.9773);-webkit-text-stroke:.8px #3f4646;">Eenheid</div>
<div class="t" style="top:767px;font-size:33.33px;line-height:33.33px;color:#3f4646;left:3228.14px;transform:scaleX(0.9337);-webkit-text-stroke:.8px #3f4646;">CO2</div>
<div class="t" style="top:767px;font-size:33.33px;line-height:33.33px;color:#3f4646;left:3439.21px;transform:scaleX(1.0472);-webkit-text-stroke:.8px #3f4646;">MKI</div>
<div class="b" style="left:1981px;top:830.5px;width:1769.6px;height:1202.5px;overflow:hidden">
<div class="b" style="left:0px;top:-6.8px;width:1608.3px;height:72.5px;background:#f0f0f0;"></div>
<div class="b" style="left:1608.3px;top:-6.8px;width:161.3px;height:72.5px;background:#fff;"></div>
<div class="b" style="left:0px;top:64.3px;width:1769.6px;height:2.8px;background:#e3e3e3;"></div>
<div class="t" style="top:11.5px;font-size:33.4px;line-height:33.4px;color:#405e5c;text-decoration:underline;left:277.03px;transform:scaleX(0.9250);text-decoration-thickness:2.500px;text-underline-offset:4px;-webkit-text-stroke:.45px #405e5c;">Kappen boom</div>
<div class="t" style="top:11.5px;font-size:33.4px;line-height:33.4px;color:#4a4a4a;left:1312.62px;transform:scaleX(0.9649);">0,00 kg</div>
<div class="t" style="top:11.5px;font-size:33.4px;line-height:33.4px;color:#4a4a4a;left:1498.64px;transform:scaleX(0.9419);">€ 0,00</div>
<svg class="b" style="left:1626px;top:9.9px;" width="47" height="36" viewBox="0 0 47 36"><g fill="none" stroke="#424242" stroke-width="4.200" stroke-linecap="round"><path d="M17.40 30.80C16.20 31.08 12.53 32.67 10.20 32.50C7.87 32.33 4.92 31.27 3.40 29.80C1.88 28.33 0.93 25.87 1.05 23.70C1.17 21.53 2.34 19.19 4.10 16.80C5.86 14.41 9.10 11.16 11.60 9.35C14.10 7.54 16.60 6.06 19.10 5.95C21.60 5.84 24.90 7.11 26.60 8.70C28.30 10.29 29.18 13.35 29.30 15.50C29.42 17.65 27.63 20.58 27.30 21.60"/><path d="M29.00 2.20C30.20 1.92 33.87 0.33 36.20 0.50C38.53 0.67 41.48 1.73 43.00 3.20C44.52 4.67 45.47 7.13 45.35 9.30C45.23 11.47 44.06 13.81 42.30 16.20C40.54 18.59 37.30 21.84 34.80 23.65C32.30 25.46 29.80 26.94 27.30 27.05C24.80 27.16 21.50 25.89 19.80 24.30C18.10 22.71 17.22 19.65 17.10 17.50C16.98 15.35 18.77 12.42 19.10 11.40"/></g></svg>
<svg class="b" style="left:1714px;top:8.2px;" width="36" height="40" viewBox="0 0 36 40"><path d="M16.300 -0.500H27.800L35.300 7V25.600Q35.300 28.400 32.500 28.400H16.300Q13.500 28.400 13.500 25.600V2.300Q13.500 -0.500 16.300 -0.500Z" fill="#424242"/><path d="M10.100 11.050H5.500Q3 11.050 3 13.500V33.800Q3 36.350 5.500 36.350H20.600Q23.100 36.350 23.100 33.800V32.200" fill="none" stroke="#424242" stroke-width="4.600" stroke-linecap="butt"/></svg>
<div class="b" style="left:0px;top:65.7px;width:1608.3px;height:72.5px;background:#f0f0f0;"></div>
<div class="b" style="left:1608.3px;top:65.7px;width:161.3px;height:72.5px;background:#fff;"></div>
<div class="b" style="left:0px;top:136.8px;width:1769.6px;height:2.8px;background:#e3e3e3;"></div>
<div class="t" style="top:84px;font-size:33.4px;line-height:33.4px;color:#405e5c;text-decoration:underline;left:279.5px;transform:scaleX(0.9376);text-decoration-thickness:2.500px;text-underline-offset:4px;-webkit-text-stroke:.45px #405e5c;">Voorbeeld</div>
<div class="t" style="top:84px;font-size:33.4px;line-height:33.4px;color:#4a4a4a;left:1312.62px;transform:scaleX(0.9649);">0,00 kg</div>
<div class="t" style="top:84px;font-size:33.4px;line-height:33.4px;color:#4a4a4a;left:1498.64px;transform:scaleX(0.9419);">€ 0,00</div>
<svg class="b" style="left:1626px;top:82.4px;" width="47" height="36" viewBox="0 0 47 36"><g fill="none" stroke="#424242" stroke-width="4.200" stroke-linecap="round"><path d="M17.40 30.80C16.20 31.08 12.53 32.67 10.20 32.50C7.87 32.33 4.92 31.27 3.40 29.80C1.88 28.33 0.93 25.87 1.05 23.70C1.17 21.53 2.34 19.19 4.10 16.80C5.86 14.41 9.10 11.16 11.60 9.35C14.10 7.54 16.60 6.06 19.10 5.95C21.60 5.84 24.90 7.11 26.60 8.70C28.30 10.29 29.18 13.35 29.30 15.50C29.42 17.65 27.63 20.58 27.30 21.60"/><path d="M29.00 2.20C30.20 1.92 33.87 0.33 36.20 0.50C38.53 0.67 41.48 1.73 43.00 3.20C44.52 4.67 45.47 7.13 45.35 9.30C45.23 11.47 44.06 13.81 42.30 16.20C40.54 18.59 37.30 21.84 34.80 23.65C32.30 25.46 29.80 26.94 27.30 27.05C24.80 27.16 21.50 25.89 19.80 24.30C18.10 22.71 17.22 19.65 17.10 17.50C16.98 15.35 18.77 12.42 19.10 11.40"/></g></svg>
<svg class="b" style="left:1714px;top:80.7px;" width="36" height="40" viewBox="0 0 36 40"><path d="M16.300 -0.500H27.800L35.300 7V25.600Q35.300 28.400 32.500 28.400H16.300Q13.500 28.400 13.500 25.600V2.300Q13.500 -0.500 16.300 -0.500Z" fill="#424242"/><path d="M10.100 11.050H5.500Q3 11.050 3 13.500V33.800Q3 36.350 5.500 36.350H20.600Q23.100 36.350 23.100 33.800V32.200" fill="none" stroke="#424242" stroke-width="4.600" stroke-linecap="butt"/></svg>
<div class="b" style="left:0px;top:138.2px;width:1608.3px;height:72.5px;background:#f0f0f0;"></div>
<div class="b" style="left:1608.3px;top:138.2px;width:161.3px;height:72.5px;background:#fff;"></div>
<div class="b" style="left:0px;top:209.3px;width:1769.6px;height:2.8px;background:#e3e3e3;"></div>
<div class="t" style="top:156.5px;font-size:33.4px;line-height:33.4px;color:#405e5c;text-decoration:underline;left:279.5px;transform:scaleX(0.8962);text-decoration-thickness:2.500px;text-underline-offset:4px;-webkit-text-stroke:.45px #405e5c;">Wand, beton, prefab, dragend en niet-drage…</div>
<div class="t" style="top:156.5px;font-size:33.4px;line-height:33.4px;color:#4a4a4a;left:1274.75px;">113,45 kg</div>
<div class="t" style="top:156.5px;font-size:33.4px;line-height:33.4px;color:#4a4a4a;left:1480.39px;transform:scaleX(0.9520);">€ 20,29</div>
<svg class="b" style="left:1626px;top:154.9px;" width="47" height="36" viewBox="0 0 47 36"><g fill="none" stroke="#424242" stroke-width="4.200" stroke-linecap="round"><path d="M17.40 30.80C16.20 31.08 12.53 32.67 10.20 32.50C7.87 32.33 4.92 31.27 3.40 29.80C1.88 28.33 0.93 25.87 1.05 23.70C1.17 21.53 2.34 19.19 4.10 16.80C5.86 14.41 9.10 11.16 11.60 9.35C14.10 7.54 16.60 6.06 19.10 5.95C21.60 5.84 24.90 7.11 26.60 8.70C28.30 10.29 29.18 13.35 29.30 15.50C29.42 17.65 27.63 20.58 27.30 21.60"/><path d="M29.00 2.20C30.20 1.92 33.87 0.33 36.20 0.50C38.53 0.67 41.48 1.73 43.00 3.20C44.52 4.67 45.47 7.13 45.35 9.30C45.23 11.47 44.06 13.81 42.30 16.20C40.54 18.59 37.30 21.84 34.80 23.65C32.30 25.46 29.80 26.94 27.30 27.05C24.80 27.16 21.50 25.89 19.80 24.30C18.10 22.71 17.22 19.65 17.10 17.50C16.98 15.35 18.77 12.42 19.10 11.40"/></g></svg>
<svg class="b" style="left:1714px;top:153.2px;" width="36" height="40" viewBox="0 0 36 40"><path d="M16.300 -0.500H27.800L35.300 7V25.600Q35.300 28.400 32.500 28.400H16.300Q13.500 28.400 13.500 25.600V2.300Q13.500 -0.500 16.300 -0.500Z" fill="#424242"/><path d="M10.100 11.050H5.500Q3 11.050 3 13.500V33.800Q3 36.350 5.500 36.350H20.600Q23.100 36.350 23.100 33.800V32.200" fill="none" stroke="#424242" stroke-width="4.600" stroke-linecap="butt"/></svg>
<div class="b" style="left:0px;top:210.7px;width:1608.3px;height:72.5px;background:#f0f0f0;"></div>
<div class="b" style="left:1608.3px;top:210.7px;width:161.3px;height:72.5px;background:#fff;"></div>
<div class="b" style="left:0px;top:281.8px;width:1769.6px;height:2.8px;background:#e3e3e3;"></div>
<div class="t" style="top:229px;font-size:33.4px;line-height:33.4px;color:#4a4a4a;left:18.82px;transform:scaleX(1.0074);">024711</div>
<div class="t" style="top:229px;font-size:33.4px;line-height:33.4px;color:#405e5c;text-decoration:underline;left:276.93px;transform:scaleX(0.9621);text-decoration-thickness:2.500px;text-underline-offset:4px;-webkit-text-stroke:.45px #405e5c;">Betonmortel</div>
<div class="t" style="top:229px;font-size:33.4px;line-height:33.4px;color:#4a4a4a;left:944.83px;">m² +1</div>
<div class="t" style="top:229px;font-size:33.4px;line-height:33.4px;color:#4a4a4a;left:1247.95px;transform:scaleX(0.9764);">1.822,40 kg</div>
<div class="t" style="top:229px;font-size:33.4px;line-height:33.4px;color:#4a4a4a;left:1462.14px;transform:scaleX(0.9517);">€ 235,84</div>
<svg class="b" style="left:1626px;top:227.4px;" width="47" height="36" viewBox="0 0 47 36"><g fill="none" stroke="#424242" stroke-width="4.200" stroke-linecap="round"><path d="M17.40 30.80C16.20 31.08 12.53 32.67 10.20 32.50C7.87 32.33 4.92 31.27 3.40 29.80C1.88 28.33 0.93 25.87 1.05 23.70C1.17 21.53 2.34 19.19 4.10 16.80C5.86 14.41 9.10 11.16 11.60 9.35C14.10 7.54 16.60 6.06 19.10 5.95C21.60 5.84 24.90 7.11 26.60 8.70C28.30 10.29 29.18 13.35 29.30 15.50C29.42 17.65 27.63 20.58 27.30 21.60"/><path d="M29.00 2.20C30.20 1.92 33.87 0.33 36.20 0.50C38.53 0.67 41.48 1.73 43.00 3.20C44.52 4.67 45.47 7.13 45.35 9.30C45.23 11.47 44.06 13.81 42.30 16.20C40.54 18.59 37.30 21.84 34.80 23.65C32.30 25.46 29.80 26.94 27.30 27.05C24.80 27.16 21.50 25.89 19.80 24.30C18.10 22.71 17.22 19.65 17.10 17.50C16.98 15.35 18.77 12.42 19.10 11.40"/></g></svg>
<svg class="b" style="left:1714px;top:225.7px;" width="36" height="40" viewBox="0 0 36 40"><path d="M16.300 -0.500H27.800L35.300 7V25.600Q35.300 28.400 32.500 28.400H16.300Q13.500 28.400 13.500 25.600V2.300Q13.500 -0.500 16.300 -0.500Z" fill="#424242"/><path d="M10.100 11.050H5.500Q3 11.050 3 13.500V33.800Q3 36.350 5.500 36.350H20.600Q23.100 36.350 23.100 33.800V32.200" fill="none" stroke="#424242" stroke-width="4.600" stroke-linecap="butt"/></svg>
<div class="b" style="left:0px;top:283.2px;width:1608.3px;height:72.5px;background:#f0f0f0;"></div>
<div class="b" style="left:1608.3px;top:283.2px;width:161.3px;height:72.5px;background:#fff;"></div>
<div class="b" style="left:0px;top:354.3px;width:1769.6px;height:2.8px;background:#e3e3e3;"></div>
<div class="t" style="top:301.5px;font-size:33.4px;line-height:33.4px;color:#405e5c;text-decoration:underline;left:276.6px;transform:scaleX(0.9634);text-decoration-thickness:2.500px;text-underline-offset:4px;-webkit-text-stroke:.45px #405e5c;">Integratie</div>
<div class="t" style="top:301.5px;font-size:33.4px;line-height:33.4px;color:#4a4a4a;left:944.83px;">m</div>
<div class="t" style="top:301.5px;font-size:33.4px;line-height:33.4px;color:#4a4a4a;left:1293.05px;transform:scaleX(0.9783);">10,00 kg</div>
<div class="t" style="top:301.5px;font-size:33.4px;line-height:33.4px;color:#4a4a4a;left:1480.39px;transform:scaleX(0.9491);">€ 10,00</div>
<svg class="b" style="left:1626px;top:299.9px;" width="47" height="36" viewBox="0 0 47 36"><g fill="none" stroke="#424242" stroke-width="4.200" stroke-linecap="round"><path d="M17.40 30.80C16.20 31.08 12.53 32.67 10.20 32.50C7.87 32.33 4.92 31.27 3.40 29.80C1.88 28.33 0.93 25.87 1.05 23.70C1.17 21.53 2.34 19.19 4.10 16.80C5.86 14.41 9.10 11.16 11.60 9.35C14.10 7.54 16.60 6.06 19.10 5.95C21.60 5.84 24.90 7.11 26.60 8.70C28.30 10.29 29.18 13.35 29.30 15.50C29.42 17.65 27.63 20.58 27.30 21.60"/><path d="M29.00 2.20C30.20 1.92 33.87 0.33 36.20 0.50C38.53 0.67 41.48 1.73 43.00 3.20C44.52 4.67 45.47 7.13 45.35 9.30C45.23 11.47 44.06 13.81 42.30 16.20C40.54 18.59 37.30 21.84 34.80 23.65C32.30 25.46 29.80 26.94 27.30 27.05C24.80 27.16 21.50 25.89 19.80 24.30C18.10 22.71 17.22 19.65 17.10 17.50C16.98 15.35 18.77 12.42 19.10 11.40"/></g></svg>
<svg class="b" style="left:1714px;top:298.2px;" width="36" height="40" viewBox="0 0 36 40"><path d="M16.300 -0.500H27.800L35.300 7V25.600Q35.300 28.400 32.500 28.400H16.300Q13.500 28.400 13.500 25.600V2.300Q13.500 -0.500 16.300 -0.500Z" fill="#424242"/><path d="M10.100 11.050H5.500Q3 11.050 3 13.500V33.800Q3 36.350 5.500 36.350H20.600Q23.100 36.350 23.100 33.800V32.200" fill="none" stroke="#424242" stroke-width="4.600" stroke-linecap="butt"/></svg>
<div class="b" style="left:0px;top:355.7px;width:1608.3px;height:72.5px;background:#f0f0f0;"></div>
<div class="b" style="left:1608.3px;top:355.7px;width:161.3px;height:72.5px;background:#fff;"></div>
<div class="b" style="left:0px;top:426.8px;width:1769.6px;height:2.8px;background:#e3e3e3;"></div>
<div class="t" style="top:374px;font-size:33.4px;line-height:33.4px;color:#4a4a4a;left:19.34px;transform:scaleX(0.9878);">Xoverig</div>
<div class="t" style="top:374px;font-size:33.4px;line-height:33.4px;color:#405e5c;text-decoration:underline;left:277.04px;transform:scaleX(0.9224);text-decoration-thickness:2.500px;text-underline-offset:4px;-webkit-text-stroke:.45px #405e5c;">Placeholder Overig</div>
<div class="t" style="top:374px;font-size:33.4px;line-height:33.4px;color:#4a4a4a;left:1248.78px;transform:scaleX(0.9717);">2.297,14 kg</div>
<div class="t" style="top:374px;font-size:33.4px;line-height:33.4px;color:#4a4a4a;left:1462.14px;transform:scaleX(0.9567);">€ 240,41</div>
<svg class="b" style="left:1626px;top:372.4px;" width="47" height="36" viewBox="0 0 47 36"><g fill="none" stroke="#424242" stroke-width="4.200" stroke-linecap="round"><path d="M17.40 30.80C16.20 31.08 12.53 32.67 10.20 32.50C7.87 32.33 4.92 31.27 3.40 29.80C1.88 28.33 0.93 25.87 1.05 23.70C1.17 21.53 2.34 19.19 4.10 16.80C5.86 14.41 9.10 11.16 11.60 9.35C14.10 7.54 16.60 6.06 19.10 5.95C21.60 5.84 24.90 7.11 26.60 8.70C28.30 10.29 29.18 13.35 29.30 15.50C29.42 17.65 27.63 20.58 27.30 21.60"/><path d="M29.00 2.20C30.20 1.92 33.87 0.33 36.20 0.50C38.53 0.67 41.48 1.73 43.00 3.20C44.52 4.67 45.47 7.13 45.35 9.30C45.23 11.47 44.06 13.81 42.30 16.20C40.54 18.59 37.30 21.84 34.80 23.65C32.30 25.46 29.80 26.94 27.30 27.05C24.80 27.16 21.50 25.89 19.80 24.30C18.10 22.71 17.22 19.65 17.10 17.50C16.98 15.35 18.77 12.42 19.10 11.40"/></g></svg>
<svg class="b" style="left:1714px;top:370.7px;" width="36" height="40" viewBox="0 0 36 40"><path d="M16.300 -0.500H27.800L35.300 7V25.600Q35.300 28.400 32.500 28.400H16.300Q13.500 28.400 13.500 25.600V2.300Q13.500 -0.500 16.300 -0.500Z" fill="#424242"/><path d="M10.100 11.050H5.500Q3 11.050 3 13.500V33.800Q3 36.350 5.500 36.350H20.600Q23.100 36.350 23.100 33.800V32.200" fill="none" stroke="#424242" stroke-width="4.600" stroke-linecap="butt"/></svg>
<div class="b" style="left:0px;top:428.2px;width:1608.3px;height:72.5px;background:#f0f0f0;"></div>
<div class="b" style="left:1608.3px;top:428.2px;width:161.3px;height:72.5px;background:#fff;"></div>
<div class="b" style="left:0px;top:499.3px;width:1769.6px;height:2.8px;background:#e3e3e3;"></div>
<div class="t" style="top:446.5px;font-size:33.4px;line-height:33.4px;color:#4a4a4a;left:19.3px;transform:scaleX(1.0435);">Xtijd</div>
<div class="t" style="top:446.5px;font-size:33.4px;line-height:33.4px;color:#405e5c;text-decoration:underline;left:276.97px;transform:scaleX(0.9465);text-decoration-thickness:2.500px;text-underline-offset:4px;-webkit-text-stroke:.45px #405e5c;">Placeholder Tijd</div>
<div class="t" style="top:446.5px;font-size:33.4px;line-height:33.4px;color:#4a4a4a;left:945px;">uur</div>
<div class="t" style="top:446.5px;font-size:33.4px;line-height:33.4px;color:#4a4a4a;left:1248.78px;transform:scaleX(0.9717);">2.297,14 kg</div>
<div class="t" style="top:446.5px;font-size:33.4px;line-height:33.4px;color:#4a4a4a;left:1462.14px;transform:scaleX(0.9567);">€ 240,41</div>
<svg class="b" style="left:1626px;top:444.9px;" width="47" height="36" viewBox="0 0 47 36"><g fill="none" stroke="#424242" stroke-width="4.200" stroke-linecap="round"><path d="M17.40 30.80C16.20 31.08 12.53 32.67 10.20 32.50C7.87 32.33 4.92 31.27 3.40 29.80C1.88 28.33 0.93 25.87 1.05 23.70C1.17 21.53 2.34 19.19 4.10 16.80C5.86 14.41 9.10 11.16 11.60 9.35C14.10 7.54 16.60 6.06 19.10 5.95C21.60 5.84 24.90 7.11 26.60 8.70C28.30 10.29 29.18 13.35 29.30 15.50C29.42 17.65 27.63 20.58 27.30 21.60"/><path d="M29.00 2.20C30.20 1.92 33.87 0.33 36.20 0.50C38.53 0.67 41.48 1.73 43.00 3.20C44.52 4.67 45.47 7.13 45.35 9.30C45.23 11.47 44.06 13.81 42.30 16.20C40.54 18.59 37.30 21.84 34.80 23.65C32.30 25.46 29.80 26.94 27.30 27.05C24.80 27.16 21.50 25.89 19.80 24.30C18.10 22.71 17.22 19.65 17.10 17.50C16.98 15.35 18.77 12.42 19.10 11.40"/></g></svg>
<svg class="b" style="left:1714px;top:443.2px;" width="36" height="40" viewBox="0 0 36 40"><path d="M16.300 -0.500H27.800L35.300 7V25.600Q35.300 28.400 32.500 28.400H16.300Q13.500 28.400 13.500 25.600V2.300Q13.500 -0.500 16.300 -0.500Z" fill="#424242"/><path d="M10.100 11.050H5.500Q3 11.050 3 13.500V33.800Q3 36.350 5.500 36.350H20.600Q23.100 36.350 23.100 33.800V32.200" fill="none" stroke="#424242" stroke-width="4.600" stroke-linecap="butt"/></svg>
<div class="b" style="left:0px;top:500.7px;width:1608.3px;height:72.5px;background:#f0f0f0;"></div>
<div class="b" style="left:1608.3px;top:500.7px;width:161.3px;height:72.5px;background:#fff;"></div>
<div class="b" style="left:0px;top:571.8px;width:1769.6px;height:2.8px;background:#e3e3e3;"></div>
<div class="t" style="top:519px;font-size:33.4px;line-height:33.4px;color:#4a4a4a;left:19.33px;">Xinhoud</div>
<div class="t" style="top:519px;font-size:33.4px;line-height:33.4px;color:#405e5c;text-decoration:underline;left:277.01px;transform:scaleX(0.9330);text-decoration-thickness:2.500px;text-underline-offset:4px;-webkit-text-stroke:.45px #405e5c;">Placeholder Inhoud</div>
<div class="t" style="top:519px;font-size:33.4px;line-height:33.4px;color:#4a4a4a;left:944.83px;">m³</div>
<div class="t" style="top:519px;font-size:33.4px;line-height:33.4px;color:#4a4a4a;left:1248.78px;transform:scaleX(0.9717);">2.297,14 kg</div>
<div class="t" style="top:519px;font-size:33.4px;line-height:33.4px;color:#4a4a4a;left:1462.14px;transform:scaleX(0.9567);">€ 240,41</div>
<svg class="b" style="left:1626px;top:517.4px;" width="47" height="36" viewBox="0 0 47 36"><g fill="none" stroke="#424242" stroke-width="4.200" stroke-linecap="round"><path d="M17.40 30.80C16.20 31.08 12.53 32.67 10.20 32.50C7.87 32.33 4.92 31.27 3.40 29.80C1.88 28.33 0.93 25.87 1.05 23.70C1.17 21.53 2.34 19.19 4.10 16.80C5.86 14.41 9.10 11.16 11.60 9.35C14.10 7.54 16.60 6.06 19.10 5.95C21.60 5.84 24.90 7.11 26.60 8.70C28.30 10.29 29.18 13.35 29.30 15.50C29.42 17.65 27.63 20.58 27.30 21.60"/><path d="M29.00 2.20C30.20 1.92 33.87 0.33 36.20 0.50C38.53 0.67 41.48 1.73 43.00 3.20C44.52 4.67 45.47 7.13 45.35 9.30C45.23 11.47 44.06 13.81 42.30 16.20C40.54 18.59 37.30 21.84 34.80 23.65C32.30 25.46 29.80 26.94 27.30 27.05C24.80 27.16 21.50 25.89 19.80 24.30C18.10 22.71 17.22 19.65 17.10 17.50C16.98 15.35 18.77 12.42 19.10 11.40"/></g></svg>
<svg class="b" style="left:1714px;top:515.7px;" width="36" height="40" viewBox="0 0 36 40"><path d="M16.300 -0.500H27.800L35.300 7V25.600Q35.300 28.400 32.500 28.400H16.300Q13.500 28.400 13.500 25.600V2.300Q13.500 -0.500 16.300 -0.500Z" fill="#424242"/><path d="M10.100 11.050H5.500Q3 11.050 3 13.500V33.800Q3 36.350 5.500 36.350H20.600Q23.100 36.350 23.100 33.800V32.200" fill="none" stroke="#424242" stroke-width="4.600" stroke-linecap="butt"/></svg>
<div class="b" style="left:0px;top:573.2px;width:1608.3px;height:72.5px;background:#f0f0f0;"></div>
<div class="b" style="left:1608.3px;top:573.2px;width:161.3px;height:72.5px;background:#fff;"></div>
<div class="b" style="left:0px;top:644.3px;width:1769.6px;height:2.8px;background:#e3e3e3;"></div>
<div class="t" style="top:591.5px;font-size:33.4px;line-height:33.4px;color:#4a4a4a;left:19.34px;transform:scaleX(0.9900);">Xoppervlak</div>
<div class="t" style="top:591.5px;font-size:33.4px;line-height:33.4px;color:#405e5c;text-decoration:underline;left:277.05px;transform:scaleX(0.9176);text-decoration-thickness:2.500px;text-underline-offset:4px;-webkit-text-stroke:.45px #405e5c;">Placeholder Oppervlak</div>
<div class="t" style="top:591.5px;font-size:33.4px;line-height:33.4px;color:#4a4a4a;left:944.83px;">m²</div>
<div class="t" style="top:591.5px;font-size:33.4px;line-height:33.4px;color:#4a4a4a;left:1248.78px;transform:scaleX(0.9717);">2.297,14 kg</div>
<div class="t" style="top:591.5px;font-size:33.4px;line-height:33.4px;color:#4a4a4a;left:1462.14px;transform:scaleX(0.9567);">€ 240,41</div>
<svg class="b" style="left:1626px;top:589.9px;" width="47" height="36" viewBox="0 0 47 36"><g fill="none" stroke="#424242" stroke-width="4.200" stroke-linecap="round"><path d="M17.40 30.80C16.20 31.08 12.53 32.67 10.20 32.50C7.87 32.33 4.92 31.27 3.40 29.80C1.88 28.33 0.93 25.87 1.05 23.70C1.17 21.53 2.34 19.19 4.10 16.80C5.86 14.41 9.10 11.16 11.60 9.35C14.10 7.54 16.60 6.06 19.10 5.95C21.60 5.84 24.90 7.11 26.60 8.70C28.30 10.29 29.18 13.35 29.30 15.50C29.42 17.65 27.63 20.58 27.30 21.60"/><path d="M29.00 2.20C30.20 1.92 33.87 0.33 36.20 0.50C38.53 0.67 41.48 1.73 43.00 3.20C44.52 4.67 45.47 7.13 45.35 9.30C45.23 11.47 44.06 13.81 42.30 16.20C40.54 18.59 37.30 21.84 34.80 23.65C32.30 25.46 29.80 26.94 27.30 27.05C24.80 27.16 21.50 25.89 19.80 24.30C18.10 22.71 17.22 19.65 17.10 17.50C16.98 15.35 18.77 12.42 19.10 11.40"/></g></svg>
<svg class="b" style="left:1714px;top:588.2px;" width="36" height="40" viewBox="0 0 36 40"><path d="M16.300 -0.500H27.800L35.300 7V25.600Q35.300 28.400 32.500 28.400H16.300Q13.500 28.400 13.500 25.600V2.300Q13.500 -0.500 16.300 -0.500Z" fill="#424242"/><path d="M10.100 11.050H5.500Q3 11.050 3 13.500V33.800Q3 36.350 5.500 36.350H20.600Q23.100 36.350 23.100 33.800V32.200" fill="none" stroke="#424242" stroke-width="4.600" stroke-linecap="butt"/></svg>
<div class="b" style="left:0px;top:645.7px;width:1608.3px;height:72.5px;background:#f0f0f0;"></div>
<div class="b" style="left:1608.3px;top:645.7px;width:161.3px;height:72.5px;background:#fff;"></div>
<div class="b" style="left:0px;top:716.8px;width:1769.6px;height:2.8px;background:#e3e3e3;"></div>
<div class="t" style="top:664px;font-size:33.4px;line-height:33.4px;color:#4a4a4a;left:19.34px;transform:scaleX(0.9827);">Xmassa</div>
<div class="t" style="top:664px;font-size:33.4px;line-height:33.4px;color:#405e5c;text-decoration:underline;left:277.03px;transform:scaleX(0.9263);text-decoration-thickness:2.500px;text-underline-offset:4px;-webkit-text-stroke:.45px #405e5c;">Placeholder Massa</div>
<div class="t" style="top:664px;font-size:33.4px;line-height:33.4px;color:#4a4a4a;left:944.83px;">kg</div>
<div class="t" style="top:664px;font-size:33.4px;line-height:33.4px;color:#4a4a4a;left:1248.78px;transform:scaleX(0.9717);">2.297,14 kg</div>
<div class="t" style="top:664px;font-size:33.4px;line-height:33.4px;color:#4a4a4a;left:1462.14px;transform:scaleX(0.9567);">€ 240,41</div>
<svg class="b" style="left:1626px;top:662.4px;" width="47" height="36" viewBox="0 0 47 36"><g fill="none" stroke="#424242" stroke-width="4.200" stroke-linecap="round"><path d="M17.40 30.80C16.20 31.08 12.53 32.67 10.20 32.50C7.87 32.33 4.92 31.27 3.40 29.80C1.88 28.33 0.93 25.87 1.05 23.70C1.17 21.53 2.34 19.19 4.10 16.80C5.86 14.41 9.10 11.16 11.60 9.35C14.10 7.54 16.60 6.06 19.10 5.95C21.60 5.84 24.90 7.11 26.60 8.70C28.30 10.29 29.18 13.35 29.30 15.50C29.42 17.65 27.63 20.58 27.30 21.60"/><path d="M29.00 2.20C30.20 1.92 33.87 0.33 36.20 0.50C38.53 0.67 41.48 1.73 43.00 3.20C44.52 4.67 45.47 7.13 45.35 9.30C45.23 11.47 44.06 13.81 42.30 16.20C40.54 18.59 37.30 21.84 34.80 23.65C32.30 25.46 29.80 26.94 27.30 27.05C24.80 27.16 21.50 25.89 19.80 24.30C18.10 22.71 17.22 19.65 17.10 17.50C16.98 15.35 18.77 12.42 19.10 11.40"/></g></svg>
<svg class="b" style="left:1714px;top:660.7px;" width="36" height="40" viewBox="0 0 36 40"><path d="M16.300 -0.500H27.800L35.300 7V25.600Q35.300 28.400 32.500 28.400H16.300Q13.500 28.400 13.500 25.600V2.300Q13.500 -0.500 16.300 -0.500Z" fill="#424242"/><path d="M10.100 11.050H5.500Q3 11.050 3 13.500V33.800Q3 36.350 5.500 36.350H20.600Q23.100 36.350 23.100 33.800V32.200" fill="none" stroke="#424242" stroke-width="4.600" stroke-linecap="butt"/></svg>
<div class="b" style="left:0px;top:718.2px;width:1608.3px;height:72.5px;background:#f0f0f0;"></div>
<div class="b" style="left:1608.3px;top:718.2px;width:161.3px;height:72.5px;background:#fff;"></div>
<div class="b" style="left:0px;top:789.3px;width:1769.6px;height:2.8px;background:#e3e3e3;"></div>
<div class="t" style="top:736.5px;font-size:33.4px;line-height:33.4px;color:#4a4a4a;left:19.33px;">Xlengte</div>
<div class="t" style="top:736.5px;font-size:33.4px;line-height:33.4px;color:#405e5c;text-decoration:underline;left:277.02px;transform:scaleX(0.9280);text-decoration-thickness:2.500px;text-underline-offset:4px;-webkit-text-stroke:.45px #405e5c;">Placeholder Lengte</div>
<div class="t" style="top:736.5px;font-size:33.4px;line-height:33.4px;color:#4a4a4a;left:944.83px;">m</div>
<div class="t" style="top:736.5px;font-size:33.4px;line-height:33.4px;color:#4a4a4a;left:1248.78px;transform:scaleX(0.9717);">2.297,14 kg</div>
<div class="t" style="top:736.5px;font-size:33.4px;line-height:33.4px;color:#4a4a4a;left:1462.14px;transform:scaleX(0.9567);">€ 240,41</div>
<svg class="b" style="left:1626px;top:734.9px;" width="47" height="36" viewBox="0 0 47 36"><g fill="none" stroke="#424242" stroke-width="4.200" stroke-linecap="round"><path d="M17.40 30.80C16.20 31.08 12.53 32.67 10.20 32.50C7.87 32.33 4.92 31.27 3.40 29.80C1.88 28.33 0.93 25.87 1.05 23.70C1.17 21.53 2.34 19.19 4.10 16.80C5.86 14.41 9.10 11.16 11.60 9.35C14.10 7.54 16.60 6.06 19.10 5.95C21.60 5.84 24.90 7.11 26.60 8.70C28.30 10.29 29.18 13.35 29.30 15.50C29.42 17.65 27.63 20.58 27.30 21.60"/><path d="M29.00 2.20C30.20 1.92 33.87 0.33 36.20 0.50C38.53 0.67 41.48 1.73 43.00 3.20C44.52 4.67 45.47 7.13 45.35 9.30C45.23 11.47 44.06 13.81 42.30 16.20C40.54 18.59 37.30 21.84 34.80 23.65C32.30 25.46 29.80 26.94 27.30 27.05C24.80 27.16 21.50 25.89 19.80 24.30C18.10 22.71 17.22 19.65 17.10 17.50C16.98 15.35 18.77 12.42 19.10 11.40"/></g></svg>
<svg class="b" style="left:1714px;top:733.2px;" width="36" height="40" viewBox="0 0 36 40"><path d="M16.300 -0.500H27.800L35.300 7V25.600Q35.300 28.400 32.500 28.400H16.300Q13.500 28.400 13.500 25.600V2.300Q13.500 -0.500 16.300 -0.500Z" fill="#424242"/><path d="M10.100 11.050H5.500Q3 11.050 3 13.500V33.800Q3 36.350 5.500 36.350H20.600Q23.100 36.350 23.100 33.800V32.200" fill="none" stroke="#424242" stroke-width="4.600" stroke-linecap="butt"/></svg>
<div class="b" style="left:0px;top:790.7px;width:1608.3px;height:72.5px;background:#f0f0f0;"></div>
<div class="b" style="left:1608.3px;top:790.7px;width:161.3px;height:72.5px;background:#fff;"></div>
<div class="b" style="left:0px;top:861.8px;width:1769.6px;height:2.8px;background:#e3e3e3;"></div>
<div class="t" style="top:809px;font-size:33.4px;line-height:33.4px;color:#405e5c;text-decoration:underline;left:278.08px;transform:scaleX(0.9434);text-decoration-thickness:2.500px;text-underline-offset:4px;-webkit-text-stroke:.45px #405e5c;">Stellen metselprofielen</div>
<div class="t" style="top:809px;font-size:33.4px;line-height:33.4px;color:#4a4a4a;left:946.16px;">st</div>
<div class="t" style="top:809px;font-size:33.4px;line-height:33.4px;color:#4a4a4a;left:1293.88px;transform:scaleX(0.9717);">20,00 kg</div>
<div class="t" style="top:809px;font-size:33.4px;line-height:33.4px;color:#4a4a4a;left:1480.39px;transform:scaleX(0.9491);">€ 14,00</div>
<svg class="b" style="left:1626px;top:807.4px;" width="47" height="36" viewBox="0 0 47 36"><g fill="none" stroke="#424242" stroke-width="4.200" stroke-linecap="round"><path d="M17.40 30.80C16.20 31.08 12.53 32.67 10.20 32.50C7.87 32.33 4.92 31.27 3.40 29.80C1.88 28.33 0.93 25.87 1.05 23.70C1.17 21.53 2.34 19.19 4.10 16.80C5.86 14.41 9.10 11.16 11.60 9.35C14.10 7.54 16.60 6.06 19.10 5.95C21.60 5.84 24.90 7.11 26.60 8.70C28.30 10.29 29.18 13.35 29.30 15.50C29.42 17.65 27.63 20.58 27.30 21.60"/><path d="M29.00 2.20C30.20 1.92 33.87 0.33 36.20 0.50C38.53 0.67 41.48 1.73 43.00 3.20C44.52 4.67 45.47 7.13 45.35 9.30C45.23 11.47 44.06 13.81 42.30 16.20C40.54 18.59 37.30 21.84 34.80 23.65C32.30 25.46 29.80 26.94 27.30 27.05C24.80 27.16 21.50 25.89 19.80 24.30C18.10 22.71 17.22 19.65 17.10 17.50C16.98 15.35 18.77 12.42 19.10 11.40"/></g></svg>
<svg class="b" style="left:1714px;top:805.7px;" width="36" height="40" viewBox="0 0 36 40"><path d="M16.300 -0.500H27.800L35.300 7V25.600Q35.300 28.400 32.500 28.400H16.300Q13.500 28.400 13.500 25.600V2.300Q13.500 -0.500 16.300 -0.500Z" fill="#424242"/><path d="M10.100 11.050H5.500Q3 11.050 3 13.500V33.800Q3 36.350 5.500 36.350H20.600Q23.100 36.350 23.100 33.800V32.200" fill="none" stroke="#424242" stroke-width="4.600" stroke-linecap="butt"/></svg>
<div class="b" style="left:0px;top:863.2px;width:1608.3px;height:72.5px;background:#f0f0f0;"></div>
<div class="b" style="left:1608.3px;top:863.2px;width:161.3px;height:72.5px;background:#fff;"></div>
<div class="b" style="left:0px;top:934.3px;width:1769.6px;height:2.8px;background:#e3e3e3;"></div>
<div class="t" style="top:881.5px;font-size:33.4px;line-height:33.4px;color:#4a4a4a;left:18.85px;transform:scaleX(0.9827);">010025</div>
<div class="t" style="top:881.5px;font-size:33.4px;line-height:33.4px;color:#405e5c;text-decoration:underline;left:277.49px;transform:scaleX(0.9255);text-decoration-thickness:2.500px;text-underline-offset:4px;-webkit-text-stroke:.45px #405e5c;">kraan tbv leggen en storten duurzaam</div>
<div class="t" style="top:881.5px;font-size:33.4px;line-height:33.4px;color:#4a4a4a;left:945px;">uur</div>
<div class="t" style="top:881.5px;font-size:33.4px;line-height:33.4px;color:#4a4a4a;left:1294.04px;transform:scaleX(0.9704);">94,52 kg</div>
<div class="t" style="top:881.5px;font-size:33.4px;line-height:33.4px;color:#4a4a4a;left:1480.39px;transform:scaleX(0.9520);">€ 10,01</div>
<svg class="b" style="left:1626px;top:879.9px;" width="47" height="36" viewBox="0 0 47 36"><g fill="none" stroke="#424242" stroke-width="4.200" stroke-linecap="round"><path d="M17.40 30.80C16.20 31.08 12.53 32.67 10.20 32.50C7.87 32.33 4.92 31.27 3.40 29.80C1.88 28.33 0.93 25.87 1.05 23.70C1.17 21.53 2.34 19.19 4.10 16.80C5.86 14.41 9.10 11.16 11.60 9.35C14.10 7.54 16.60 6.06 19.10 5.95C21.60 5.84 24.90 7.11 26.60 8.70C28.30 10.29 29.18 13.35 29.30 15.50C29.42 17.65 27.63 20.58 27.30 21.60"/><path d="M29.00 2.20C30.20 1.92 33.87 0.33 36.20 0.50C38.53 0.67 41.48 1.73 43.00 3.20C44.52 4.67 45.47 7.13 45.35 9.30C45.23 11.47 44.06 13.81 42.30 16.20C40.54 18.59 37.30 21.84 34.80 23.65C32.30 25.46 29.80 26.94 27.30 27.05C24.80 27.16 21.50 25.89 19.80 24.30C18.10 22.71 17.22 19.65 17.10 17.50C16.98 15.35 18.77 12.42 19.10 11.40"/></g></svg>
<svg class="b" style="left:1714px;top:878.2px;" width="36" height="40" viewBox="0 0 36 40"><path d="M16.300 -0.500H27.800L35.300 7V25.600Q35.300 28.400 32.500 28.400H16.300Q13.500 28.400 13.500 25.600V2.300Q13.500 -0.500 16.300 -0.500Z" fill="#424242"/><path d="M10.100 11.050H5.500Q3 11.050 3 13.500V33.800Q3 36.350 5.500 36.350H20.600Q23.100 36.350 23.100 33.800V32.200" fill="none" stroke="#424242" stroke-width="4.600" stroke-linecap="butt"/></svg>
<div class="b" style="left:0px;top:935.7px;width:1608.3px;height:72.5px;background:#f0f0f0;"></div>
<div class="b" style="left:1608.3px;top:935.7px;width:161.3px;height:72.5px;background:#fff;"></div>
<div class="b" style="left:0px;top:1006.8px;width:1769.6px;height:2.8px;background:#e3e3e3;"></div>
<div class="t" style="top:954px;font-size:33.4px;line-height:33.4px;color:#4a4a4a;left:18.85px;transform:scaleX(0.9827);">010015</div>
<div class="t" style="top:954px;font-size:33.4px;line-height:33.4px;color:#405e5c;text-decoration:underline;left:277.52px;transform:scaleX(0.9114);text-decoration-thickness:2.500px;text-underline-offset:4px;-webkit-text-stroke:.45px #405e5c;">kanaalplaat ongeïsoleerd [overspanning 8-1…</div>
<div class="t" style="top:954px;font-size:33.4px;line-height:33.4px;color:#4a4a4a;left:944.83px;">m²</div>
<div class="t" style="top:954px;font-size:33.4px;line-height:33.4px;color:#4a4a4a;left:1293.88px;transform:scaleX(0.9717);">67,89 kg</div>
<div class="t" style="top:954px;font-size:33.4px;line-height:33.4px;color:#4a4a4a;left:1498.64px;transform:scaleX(0.9454);">€ 6,02</div>
<svg class="b" style="left:1626px;top:952.4px;" width="47" height="36" viewBox="0 0 47 36"><g fill="none" stroke="#424242" stroke-width="4.200" stroke-linecap="round"><path d="M17.40 30.80C16.20 31.08 12.53 32.67 10.20 32.50C7.87 32.33 4.92 31.27 3.40 29.80C1.88 28.33 0.93 25.87 1.05 23.70C1.17 21.53 2.34 19.19 4.10 16.80C5.86 14.41 9.10 11.16 11.60 9.35C14.10 7.54 16.60 6.06 19.10 5.95C21.60 5.84 24.90 7.11 26.60 8.70C28.30 10.29 29.18 13.35 29.30 15.50C29.42 17.65 27.63 20.58 27.30 21.60"/><path d="M29.00 2.20C30.20 1.92 33.87 0.33 36.20 0.50C38.53 0.67 41.48 1.73 43.00 3.20C44.52 4.67 45.47 7.13 45.35 9.30C45.23 11.47 44.06 13.81 42.30 16.20C40.54 18.59 37.30 21.84 34.80 23.65C32.30 25.46 29.80 26.94 27.30 27.05C24.80 27.16 21.50 25.89 19.80 24.30C18.10 22.71 17.22 19.65 17.10 17.50C16.98 15.35 18.77 12.42 19.10 11.40"/></g></svg>
<svg class="b" style="left:1714px;top:950.7px;" width="36" height="40" viewBox="0 0 36 40"><path d="M16.300 -0.500H27.800L35.300 7V25.600Q35.300 28.400 32.500 28.400H16.300Q13.500 28.400 13.500 25.600V2.300Q13.500 -0.500 16.300 -0.500Z" fill="#424242"/><path d="M10.100 11.050H5.500Q3 11.050 3 13.500V33.800Q3 36.350 5.500 36.350H20.600Q23.100 36.350 23.100 33.800V32.200" fill="none" stroke="#424242" stroke-width="4.600" stroke-linecap="butt"/></svg>
<div class="b" style="left:0px;top:1008.2px;width:1608.3px;height:72.5px;background:#f0f0f0;"></div>
<div class="b" style="left:1608.3px;top:1008.2px;width:161.3px;height:72.5px;background:#fff;"></div>
<div class="b" style="left:0px;top:1079.3px;width:1769.6px;height:2.8px;background:#d8d8d8;"></div>
<div class="t" style="top:1026.5px;font-size:33.4px;line-height:33.4px;color:#4a4a4a;left:18.85px;transform:scaleX(0.9842);">010021</div>
<div class="t" style="top:1026.5px;font-size:33.4px;line-height:33.4px;color:#405e5c;text-decoration:underline;left:278.27px;transform:scaleX(0.9174);text-decoration-thickness:2.500px;text-underline-offset:4px;-webkit-text-stroke:.45px #405e5c;">deksels voor kanaalplaatvloer dik 260mm d…</div>
<div class="t" style="top:1026.5px;font-size:33.4px;line-height:33.4px;color:#4a4a4a;left:946.16px;">st</div>
<div class="t" style="top:1026.5px;font-size:33.4px;line-height:33.4px;color:#4a4a4a;left:1274.8px;transform:scaleX(0.9791);">196,65 kg</div>
<div class="t" style="top:1026.5px;font-size:33.4px;line-height:33.4px;color:#4a4a4a;left:1480.39px;transform:scaleX(0.9491);">€ 24,90</div>
<svg class="b" style="left:1626px;top:1024.9px;" width="47" height="36" viewBox="0 0 47 36"><g fill="none" stroke="#424242" stroke-width="4.200" stroke-linecap="round"><path d="M17.40 30.80C16.20 31.08 12.53 32.67 10.20 32.50C7.87 32.33 4.92 31.27 3.40 29.80C1.88 28.33 0.93 25.87 1.05 23.70C1.17 21.53 2.34 19.19 4.10 16.80C5.86 14.41 9.10 11.16 11.60 9.35C14.10 7.54 16.60 6.06 19.10 5.95C21.60 5.84 24.90 7.11 26.60 8.70C28.30 10.29 29.18 13.35 29.30 15.50C29.42 17.65 27.63 20.58 27.30 21.60"/><path d="M29.00 2.20C30.20 1.92 33.87 0.33 36.20 0.50C38.53 0.67 41.48 1.73 43.00 3.20C44.52 4.67 45.47 7.13 45.35 9.30C45.23 11.47 44.06 13.81 42.30 16.20C40.54 18.59 37.30 21.84 34.80 23.65C32.30 25.46 29.80 26.94 27.30 27.05C24.80 27.16 21.50 25.89 19.80 24.30C18.10 22.71 17.22 19.65 17.10 17.50C16.98 15.35 18.77 12.42 19.10 11.40"/></g></svg>
<svg class="b" style="left:1714px;top:1023.2px;" width="36" height="40" viewBox="0 0 36 40"><path d="M16.300 -0.500H27.800L35.300 7V25.600Q35.300 28.400 32.500 28.400H16.300Q13.500 28.400 13.500 25.600V2.300Q13.500 -0.500 16.300 -0.500Z" fill="#424242"/><path d="M10.100 11.050H5.500Q3 11.050 3 13.500V33.800Q3 36.350 5.500 36.350H20.600Q23.100 36.350 23.100 33.800V32.200" fill="none" stroke="#424242" stroke-width="4.600" stroke-linecap="butt"/></svg>
<div class="b" style="left:0px;top:1080.7px;width:1608.3px;height:72.5px;background:#e0e0e0;"></div>
<div class="b" style="left:1608.3px;top:1080.7px;width:161.3px;height:72.5px;background:#e0e0e0;"></div>
<div class="b" style="left:1609.5px;top:1080.7px;width:80.5px;height:72.5px;background:#d0d0d0;"></div>
<div class="b" style="left:0px;top:1151.8px;width:1769.6px;height:2.8px;background:#d8d8d8;"></div>
<div class="t" style="top:1099px;font-size:33.4px;line-height:33.4px;color:#4a4a4a;left:18.85px;transform:scaleX(0.9842);">010012</div>
<div class="t" style="top:1099px;font-size:33.4px;line-height:33.4px;color:#405e5c;text-decoration:underline;left:277.66px;transform:scaleX(0.9202);text-decoration-thickness:2.500px;text-underline-offset:4px;-webkit-text-stroke:.45px #405e5c;">betonmortel C20/25 milieuklasse XC1 regio…</div>
<div class="t" style="top:1099px;font-size:33.4px;line-height:33.4px;color:#4a4a4a;left:944.83px;">m³</div>
<svg class="b" style="left:1626px;top:1097.4px;" width="47" height="36" viewBox="0 0 47 36"><g fill="none" stroke="#424242" stroke-width="4.200" stroke-linecap="round"><path d="M17.40 30.80C16.20 31.08 12.53 32.67 10.20 32.50C7.87 32.33 4.92 31.27 3.40 29.80C1.88 28.33 0.93 25.87 1.05 23.70C1.17 21.53 2.34 19.19 4.10 16.80C5.86 14.41 9.10 11.16 11.60 9.35C14.10 7.54 16.60 6.06 19.10 5.95C21.60 5.84 24.90 7.11 26.60 8.70C28.30 10.29 29.18 13.35 29.30 15.50C29.42 17.65 27.63 20.58 27.30 21.60"/><path d="M29.00 2.20C30.20 1.92 33.87 0.33 36.20 0.50C38.53 0.67 41.48 1.73 43.00 3.20C44.52 4.67 45.47 7.13 45.35 9.30C45.23 11.47 44.06 13.81 42.30 16.20C40.54 18.59 37.30 21.84 34.80 23.65C32.30 25.46 29.80 26.94 27.30 27.05C24.80 27.16 21.50 25.89 19.80 24.30C18.10 22.71 17.22 19.65 17.10 17.50C16.98 15.35 18.77 12.42 19.10 11.40"/></g></svg>
<svg class="b" style="left:1714px;top:1095.7px;" width="36" height="40" viewBox="0 0 36 40"><path d="M16.300 -0.500H27.800L35.300 7V25.600Q35.300 28.400 32.500 28.400H16.300Q13.500 28.400 13.500 25.600V2.300Q13.500 -0.500 16.300 -0.500Z" fill="#424242"/><path d="M10.100 11.050H5.500Q3 11.050 3 13.500V33.800Q3 36.350 5.500 36.350H20.600Q23.100 36.350 23.100 33.800V32.200" fill="none" stroke="#424242" stroke-width="4.600" stroke-linecap="butt"/></svg>
<div class="b" style="left:0px;top:1153.2px;width:1608.3px;height:72.5px;background:#f0f0f0;"></div>
<div class="b" style="left:1608.3px;top:1153.2px;width:161.3px;height:72.5px;background:#fff;"></div>
<div class="b" style="left:0px;top:1224.3px;width:1769.6px;height:2.8px;background:#e3e3e3;"></div>
<div class="t" style="top:1171.5px;font-size:33.4px;line-height:33.4px;color:#405e5c;left:277.4px;transform:scaleX(0.9695);-webkit-text-stroke:.45px #405e5c;">robin</div>
<div class="t" style="top:1171.5px;font-size:33.4px;line-height:33.4px;color:#4a4a4a;left:1312.62px;transform:scaleX(0.9649);">0,00 kg</div>
<div class="t" style="top:1171.5px;font-size:33.4px;line-height:33.4px;color:#4a4a4a;left:1498.64px;transform:scaleX(0.9419);">€ 0,00</div>
<svg class="b" style="left:1626px;top:1169.9px;" width="47" height="36" viewBox="0 0 47 36"><g fill="none" stroke="#424242" stroke-width="4.200" stroke-linecap="round"><path d="M17.40 30.80C16.20 31.08 12.53 32.67 10.20 32.50C7.87 32.33 4.92 31.27 3.40 29.80C1.88 28.33 0.93 25.87 1.05 23.70C1.17 21.53 2.34 19.19 4.10 16.80C5.86 14.41 9.10 11.16 11.60 9.35C14.10 7.54 16.60 6.06 19.10 5.95C21.60 5.84 24.90 7.11 26.60 8.70C28.30 10.29 29.18 13.35 29.30 15.50C29.42 17.65 27.63 20.58 27.30 21.60"/><path d="M29.00 2.20C30.20 1.92 33.87 0.33 36.20 0.50C38.53 0.67 41.48 1.73 43.00 3.20C44.52 4.67 45.47 7.13 45.35 9.30C45.23 11.47 44.06 13.81 42.30 16.20C40.54 18.59 37.30 21.84 34.80 23.65C32.30 25.46 29.80 26.94 27.30 27.05C24.80 27.16 21.50 25.89 19.80 24.30C18.10 22.71 17.22 19.65 17.10 17.50C16.98 15.35 18.77 12.42 19.10 11.40"/></g></svg>
<svg class="b" style="left:1714px;top:1168.2px;" width="36" height="40" viewBox="0 0 36 40"><path d="M16.300 -0.500H27.800L35.300 7V25.600Q35.300 28.400 32.500 28.400H16.300Q13.500 28.400 13.500 25.600V2.300Q13.500 -0.500 16.300 -0.500Z" fill="#424242"/><path d="M10.100 11.050H5.500Q3 11.050 3 13.500V33.800Q3 36.350 5.500 36.350H20.600Q23.100 36.350 23.100 33.800V32.200" fill="none" stroke="#424242" stroke-width="4.600" stroke-linecap="butt"/></svg>
<div class="b" style="left:257.6px;top:0px;width:2.7px;height:1202.5px;background:#e1e1e1;"></div>
<div class="b" style="left:924.6px;top:0px;width:2.7px;height:1202.5px;background:#e1e1e1;"></div>
<div class="b" style="left:1224.6px;top:0px;width:2.7px;height:1202.5px;background:#e1e1e1;"></div>
<div class="b" style="left:1436.9px;top:0px;width:2.7px;height:1202.5px;background:#e1e1e1;"></div>
<div class="b" style="left:1607.4px;top:0px;width:2.7px;height:1202.5px;background:#e1e1e1;"></div>
<div class="b" style="left:1689.1px;top:0px;width:2.7px;height:1202.5px;background:#e1e1e1;"></div>
</div>
<div class="b" style="left:2238.3px;top:740px;width:2.4px;height:88.5px;background:#cfe3e3;"></div>
<div class="b" style="left:2905.3px;top:740px;width:2.4px;height:88.5px;background:#cfe3e3;"></div>
<div class="b" style="left:3205.3px;top:740px;width:2.4px;height:88.5px;background:#cfe3e3;"></div>
<div class="b" style="left:3417.6px;top:740px;width:2.4px;height:88.5px;background:#cfe3e3;"></div>
<div class="b" style="left:3588.1px;top:740px;width:2.4px;height:88.5px;background:#cfe3e3;"></div>
<div class="b" style="left:3669.8px;top:740px;width:2.4px;height:88.5px;background:#d3e6e6;"></div>
<div class="b" style="left:3002.8px;top:1917.7px;width:562.7px;height:59.7px;background:#424242;border-radius:9px;"></div>
<svg class="b" style="left:3564px;top:1930px;" width="17" height="35" viewBox="0 0 17 35"><path d="M0 0L16.500 17.500L0 35Z" fill="#424242"/></svg>
<div class="t" style="top:1931px;font-size:31.88px;line-height:31.88px;color:#fff;left:3021.9px;transform:scaleX(0.9802);-webkit-text-stroke:.5px #fff;">Koppel milieukaart aan calculatieregel</div>
<svg class="b" style="left:3755.5px;top:748px;" width="15" height="10" viewBox="0 0 15 10"><path d="M0 9.500H14.500L7.250 0.500Z" fill="#c9c9c9"/></svg>
<div class="b" style="left:3755.8px;top:1147.5px;width:14.5px;height:836.5px;background:#c1c1c1;border-radius:7.250px;"></div>
<svg class="b" style="left:3755.5px;top:2013px;" width="15" height="13" viewBox="0 0 15 13"><path d="M0 0.500H14.500L7.250 12.500Z" fill="#c9c9c9"/></svg>
<svg class="b" style="left:1993px;top:2037.5px;" width="13" height="16" viewBox="0 0 13 16"><path d="M12.500 0V15.500L0.500 7.750Z" fill="#c9c9c9"/></svg>
<div class="b" style="left:2014px;top:2037.7px;width:1629px;height:14.5px;background:#c1c1c1;border-radius:7.250px;"></div>
<svg class="b" style="left:3731.5px;top:2037.5px;" width="13" height="16" viewBox="0 0 13 16"><path d="M0.500 0V15.500L12.500 7.750Z" fill="#c9c9c9"/></svg>
<div class="t" style="top:2116px;font-size:35.51px;line-height:35.51px;color:#555;left:2214.09px;transform:scaleX(1.0768);">25</div>
<svg class="b" style="left:2467.5px;top:2127px;" width="26" height="14" viewBox="0 0 26 14"><path d="M0 0H26L13 13.500Z" fill="#757575"/></svg>
<div class="t" style="top:2119.7px;font-size:36.23px;line-height:36.23px;color:#555;left:2596.78px;">Totaal: 282</div>
<svg class="b" style="left:2824px;top:2126px;" width="18" height="28" viewBox="0 0 18 28"><path d="M15.500 2L4 14L15.500 26" fill="none" stroke="#c2c2c2" stroke-width="4.600"/></svg>
<div class="b" style="left:2886px;top:2107.5px;width:65px;height:65px;background:#88d4cf;border-radius:11px;"></div>
<div class="t" style="top:2125px;font-size:33.33px;line-height:33.33px;color:#111;left:2908.75px;-webkit-text-stroke:.9px #111;">1</div>
<div class="t" style="top:2125px;font-size:33.33px;line-height:33.33px;color:#4f4f4f;left:2992.17px;-webkit-text-stroke:.8px #4f4f4f;">2</div>
<div class="t" style="top:2125px;font-size:33.33px;line-height:33.33px;color:#4f4f4f;left:3077.83px;-webkit-text-stroke:.8px #4f4f4f;">3</div>
<div class="t" style="top:2125px;font-size:33.33px;line-height:33.33px;color:#4f4f4f;left:3162.83px;-webkit-text-stroke:.8px #4f4f4f;">4</div>
<div class="t" style="top:2125px;font-size:33.33px;line-height:33.33px;color:#4f4f4f;left:3248.35px;-webkit-text-stroke:.8px #4f4f4f;">5</div>
<div class="t" style="top:2125px;font-size:33.33px;line-height:33.33px;color:#4f4f4f;left:3332.58px;-webkit-text-stroke:.8px #4f4f4f;">6</div>
<div class="b" style="left:3411.8px;top:2148px;width:5px;height:5px;background:#555;"></div>
<div class="b" style="left:3424.8px;top:2148px;width:5px;height:5px;background:#555;"></div>
<div class="b" style="left:3437.8px;top:2148px;width:5px;height:5px;background:#555;"></div>
<div class="t" style="top:2125px;font-size:33.33px;line-height:33.33px;color:#4f4f4f;left:3493.55px;-webkit-text-stroke:.8px #4f4f4f;">11</div>
<div class="t" style="top:2125px;font-size:33.33px;line-height:33.33px;color:#4f4f4f;left:3578.5px;-webkit-text-stroke:.8px #4f4f4f;">12</div>
<svg class="b" style="left:3673.5px;top:2126px;" width="18" height="28" viewBox="0 0 18 28"><path d="M2.500 2L14 14L2.500 26" fill="none" stroke="#757575" stroke-width="4.600"/></svg>
</body></html>
